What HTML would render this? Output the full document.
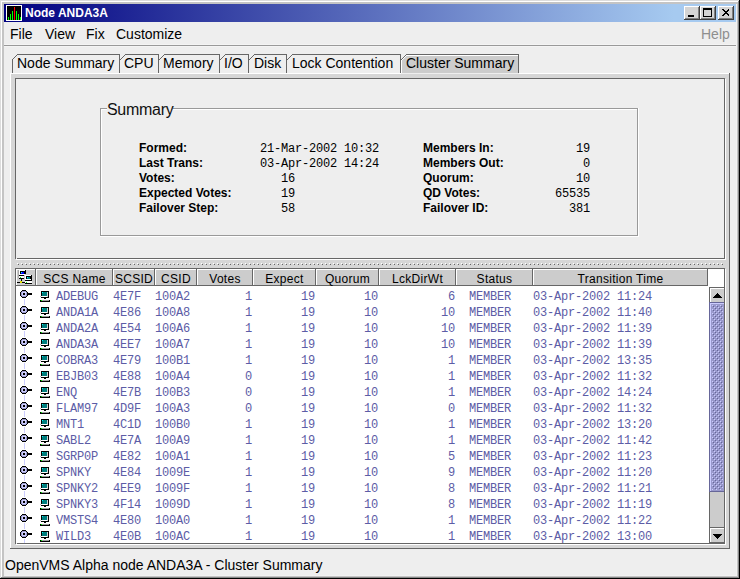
<!DOCTYPE html>
<html><head><meta charset="utf-8"><style>
html,body{margin:0;padding:0;}
body{width:740px;height:579px;overflow:hidden;position:relative;background:#eeeeee;font-family:"Liberation Sans",sans-serif;}
div{position:absolute;}
.t{white-space:pre;font-size:14px;line-height:16px;color:#000;}
.tb{white-space:pre;font-size:12px;line-height:14px;font-weight:bold;color:#000;}
.m{white-space:pre;font-family:"Liberation Mono",monospace;font-size:12px;line-height:14px;letter-spacing:-0.2px;color:#000;}
.c{white-space:pre;font-family:"Liberation Mono",monospace;font-size:12px;line-height:16px;letter-spacing:-0.2px;color:#5c5ca6;}
.h{white-space:pre;font-size:12px;letter-spacing:0.3px;line-height:16px;color:#000;text-align:center;}
</style></head><body>
<div style="position:absolute;left:0px;top:0px;width:740px;height:579px;background:#000000"></div>
<div style="position:absolute;left:0px;top:0px;width:739px;height:578px;background:#888888"></div>
<div style="position:absolute;left:0px;top:0px;width:738px;height:577px;background:#c4c4c4"></div>
<div style="position:absolute;left:0px;top:0px;width:1px;height:578px;background:#dcdcdc"></div>
<div style="position:absolute;left:0px;top:0px;width:739px;height:1px;background:#dcdcdc"></div>
<div style="position:absolute;left:1px;top:1px;width:1px;height:576px;background:#ffffff"></div>
<div style="position:absolute;left:1px;top:1px;width:737px;height:1px;background:#ffffff"></div>
<div style="position:absolute;left:4px;top:4px;width:733px;height:572px;background:#f2f2f2"></div>
<div style="position:absolute;left:4px;top:4px;width:732px;height:571px;background:#eeeeee"></div>
<div style="position:absolute;left:4px;top:4px;width:732px;height:18px;background:linear-gradient(to right,#000080 0px,#a6caf0 670px)"></div>
<svg style="position:absolute;left:6px;top:5px" width="16" height="16" viewBox="0 0 16 16" shape-rendering="crispEdges">
<rect x="0" y="0" width="16" height="16" fill="#fff"/><rect x="1" y="1" width="14" height="14" fill="#000"/>
<rect x="2" y="12" width="1" height="3" fill="#00ff00"/><rect x="4" y="9" width="1" height="6" fill="#00ff00"/>
<rect x="6" y="6" width="1" height="9" fill="#00ff00"/><rect x="8" y="2" width="1" height="13" fill="#ff0000"/>
<rect x="10" y="6" width="1" height="9" fill="#00ff00"/><rect x="12" y="9" width="1" height="6" fill="#00ff00"/>
<rect x="14" y="12" width="1" height="3" fill="#00ff00"/>
</svg>
<div class="tb" style="left:25px;top:6px;color:#fff;">Node ANDA3A</div>
<svg style="position:absolute;left:684px;top:6px" width="16" height="14" viewBox="0 0 16 14" shape-rendering="crispEdges"><rect x="0" y="0" width="16" height="14" fill="#404040"/><rect x="0" y="0" width="15" height="13" fill="#ffffff"/><rect x="1" y="1" width="14" height="12" fill="#808080"/><rect x="1" y="1" width="13" height="11" fill="#d4d4d4"/><rect x="4" y="9" width="6" height="2" fill="#000"/></svg>
<svg style="position:absolute;left:700px;top:6px" width="16" height="14" viewBox="0 0 16 14" shape-rendering="crispEdges"><rect x="0" y="0" width="16" height="14" fill="#404040"/><rect x="0" y="0" width="15" height="13" fill="#ffffff"/><rect x="1" y="1" width="14" height="12" fill="#808080"/><rect x="1" y="1" width="13" height="11" fill="#d4d4d4"/><rect x="3" y="2" width="9" height="9" fill="#000"/><rect x="4" y="4" width="7" height="6" fill="#d4d4d4"/></svg>
<svg style="position:absolute;left:718px;top:6px" width="16" height="14" viewBox="0 0 16 14" shape-rendering="crispEdges"><rect x="0" y="0" width="16" height="14" fill="#404040"/><rect x="0" y="0" width="15" height="13" fill="#ffffff"/><rect x="1" y="1" width="14" height="12" fill="#808080"/><rect x="1" y="1" width="13" height="11" fill="#d4d4d4"/><path d="M4 3 L5 3 L7.5 5.5 L10 3 L11 3 L11 4 L8.5 6.5 L11 9 L11 10 L10 10 L7.5 7.5 L5 10 L4 10 L4 9 L6.5 6.5 L4 4 Z" fill="#000"/></svg>
<div class="t" style="left:10px;top:26px;">File</div>
<div class="t" style="left:45px;top:26px;">View</div>
<div class="t" style="left:86px;top:26px;">Fix</div>
<div class="t" style="left:116px;top:26px;">Customize</div>
<div class="t" style="left:701px;top:26px;color:#8e8e8e;">Help</div>
<div style="position:absolute;left:4px;top:44px;width:732px;height:3px;background:#f4f4f4"></div>
<div style="position:absolute;left:4px;top:45px;width:732px;height:1px;background:#999999"></div>
<div style="position:absolute;left:10px;top:73px;width:720px;height:476px;background:#d6d6d6"></div>
<div style="position:absolute;left:10px;top:73px;width:720px;height:1px;background:#ffffff"></div>
<div style="position:absolute;left:10px;top:73px;width:1px;height:476px;background:#ffffff"></div>
<div style="position:absolute;left:401px;top:73px;width:118px;height:1px;background:#eeeeee"></div>
<div style="position:absolute;left:729px;top:73px;width:1px;height:476px;background:#666666"></div>
<div style="position:absolute;left:10px;top:548px;width:720px;height:1px;background:#666666"></div>
<svg style="position:absolute;left:12px;top:54px" width="108" height="19" viewBox="0 0 108 19" shape-rendering="crispEdges"><polygon points="0,6 6,0 108,0 108,19 0,19" fill="#eeeeee"/><rect x="6" y="0" width="102" height="1" fill="#666666"/><rect x="0" y="5" width="1" height="1" fill="#666666"/><rect x="1" y="4" width="1" height="1" fill="#666666"/><rect x="2" y="3" width="1" height="1" fill="#666666"/><rect x="3" y="2" width="1" height="1" fill="#666666"/><rect x="4" y="1" width="1" height="1" fill="#666666"/><rect x="5" y="0" width="1" height="1" fill="#666666"/><rect x="107" y="0" width="1" height="19" fill="#666666"/><rect x="0" y="5" width="1" height="14" fill="#666666"/></svg>
<div class="t" style="left:17px;top:55px;">Node Summary</div>
<svg style="position:absolute;left:120px;top:54px" width="39" height="19" viewBox="0 0 39 19" shape-rendering="crispEdges"><polygon points="0,6 6,0 39,0 39,19 0,19" fill="#eeeeee"/><rect x="6" y="0" width="33" height="1" fill="#666666"/><rect x="0" y="5" width="1" height="1" fill="#666666"/><rect x="1" y="4" width="1" height="1" fill="#666666"/><rect x="2" y="3" width="1" height="1" fill="#666666"/><rect x="3" y="2" width="1" height="1" fill="#666666"/><rect x="4" y="1" width="1" height="1" fill="#666666"/><rect x="5" y="0" width="1" height="1" fill="#666666"/><rect x="38" y="0" width="1" height="19" fill="#666666"/></svg>
<div class="t" style="left:124px;top:55px;">CPU</div>
<svg style="position:absolute;left:159px;top:54px" width="61" height="19" viewBox="0 0 61 19" shape-rendering="crispEdges"><polygon points="0,6 6,0 61,0 61,19 0,19" fill="#eeeeee"/><rect x="6" y="0" width="55" height="1" fill="#666666"/><rect x="0" y="5" width="1" height="1" fill="#666666"/><rect x="1" y="4" width="1" height="1" fill="#666666"/><rect x="2" y="3" width="1" height="1" fill="#666666"/><rect x="3" y="2" width="1" height="1" fill="#666666"/><rect x="4" y="1" width="1" height="1" fill="#666666"/><rect x="5" y="0" width="1" height="1" fill="#666666"/><rect x="60" y="0" width="1" height="19" fill="#666666"/></svg>
<div class="t" style="left:163px;top:55px;">Memory</div>
<svg style="position:absolute;left:220px;top:54px" width="29" height="19" viewBox="0 0 29 19" shape-rendering="crispEdges"><polygon points="0,6 6,0 29,0 29,19 0,19" fill="#eeeeee"/><rect x="6" y="0" width="23" height="1" fill="#666666"/><rect x="0" y="5" width="1" height="1" fill="#666666"/><rect x="1" y="4" width="1" height="1" fill="#666666"/><rect x="2" y="3" width="1" height="1" fill="#666666"/><rect x="3" y="2" width="1" height="1" fill="#666666"/><rect x="4" y="1" width="1" height="1" fill="#666666"/><rect x="5" y="0" width="1" height="1" fill="#666666"/><rect x="28" y="0" width="1" height="19" fill="#666666"/></svg>
<div class="t" style="left:224px;top:55px;">I/O</div>
<svg style="position:absolute;left:249px;top:54px" width="38" height="19" viewBox="0 0 38 19" shape-rendering="crispEdges"><polygon points="0,6 6,0 38,0 38,19 0,19" fill="#eeeeee"/><rect x="6" y="0" width="32" height="1" fill="#666666"/><rect x="0" y="5" width="1" height="1" fill="#666666"/><rect x="1" y="4" width="1" height="1" fill="#666666"/><rect x="2" y="3" width="1" height="1" fill="#666666"/><rect x="3" y="2" width="1" height="1" fill="#666666"/><rect x="4" y="1" width="1" height="1" fill="#666666"/><rect x="5" y="0" width="1" height="1" fill="#666666"/><rect x="37" y="0" width="1" height="19" fill="#666666"/></svg>
<div class="t" style="left:254px;top:55px;">Disk</div>
<svg style="position:absolute;left:287px;top:54px" width="114" height="19" viewBox="0 0 114 19" shape-rendering="crispEdges"><polygon points="0,6 6,0 114,0 114,19 0,19" fill="#eeeeee"/><rect x="6" y="0" width="108" height="1" fill="#666666"/><rect x="0" y="5" width="1" height="1" fill="#666666"/><rect x="1" y="4" width="1" height="1" fill="#666666"/><rect x="2" y="3" width="1" height="1" fill="#666666"/><rect x="3" y="2" width="1" height="1" fill="#666666"/><rect x="4" y="1" width="1" height="1" fill="#666666"/><rect x="5" y="0" width="1" height="1" fill="#666666"/><rect x="113" y="0" width="1" height="19" fill="#666666"/></svg>
<div class="t" style="left:292px;top:55px;">Lock Contention</div>
<svg style="position:absolute;left:401px;top:54px" width="118" height="19" viewBox="0 0 118 19" shape-rendering="crispEdges"><polygon points="0,6 6,0 118,0 118,19 0,19" fill="#cccccc"/><rect x="6" y="0" width="112" height="1" fill="#666666"/><rect x="0" y="5" width="1" height="1" fill="#666666"/><rect x="1" y="4" width="1" height="1" fill="#666666"/><rect x="1" y="5" width="1" height="1" fill="#ffffff"/><rect x="2" y="3" width="1" height="1" fill="#666666"/><rect x="2" y="4" width="1" height="1" fill="#ffffff"/><rect x="3" y="2" width="1" height="1" fill="#666666"/><rect x="3" y="3" width="1" height="1" fill="#ffffff"/><rect x="4" y="1" width="1" height="1" fill="#666666"/><rect x="4" y="2" width="1" height="1" fill="#ffffff"/><rect x="5" y="0" width="1" height="1" fill="#666666"/><rect x="5" y="1" width="1" height="1" fill="#ffffff"/><rect x="6" y="1" width="111" height="1" fill="#ffffff"/><rect x="117" y="0" width="1" height="19" fill="#666666"/><rect x="0" y="6" width="1" height="13" fill="#ffffff"/></svg>
<div class="t" style="left:406px;top:55px;">Cluster Summary</div>
<div style="position:absolute;left:16px;top:79px;width:710px;height:181px;background:#ffffff"></div>
<div style="position:absolute;left:15px;top:78px;width:710px;height:181px;background:#666666"></div>
<div style="position:absolute;left:16px;top:79px;width:708px;height:179px;background:#eeeeee"></div>
<div style="position:absolute;left:16px;top:258px;width:1px;height:1px;background:#eeeeee"></div>
<div style="position:absolute;left:100px;top:108px;width:538px;height:128px;border:1px solid #999999;box-sizing:border-box;"></div>
<div style="position:absolute;left:101px;top:109px;width:538px;height:128px;border:1px solid #ffffff;border-right:none;border-bottom:none;box-sizing:border-box;"></div>
<div style="position:absolute;left:638px;top:108px;width:1px;height:129px;background:#fff"></div>
<div style="position:absolute;left:100px;top:236px;width:539px;height:1px;background:#fff"></div>
<div style="position:absolute;left:100px;top:108px;width:538px;height:1px;background:#999999"></div>
<div style="position:absolute;left:100px;top:108px;width:1px;height:128px;background:#999999"></div>
<div style="position:absolute;left:637px;top:108px;width:1px;height:128px;background:#999999"></div>
<div style="position:absolute;left:100px;top:235px;width:538px;height:1px;background:#999999"></div>
<div style="position:absolute;left:107px;top:104px;width:66px;height:12px;background:#eeeeee"></div>
<div class="t" style="left:107px;top:101px;font-size:16px;line-height:18px;color:#111;letter-spacing:-0.3px;">Summary</div>
<div class="tb" style="left:139px;top:141px;">Formed:</div>
<div class="m" style="left:260px;top:142px;">21-Mar-2002 10:32</div>
<div class="tb" style="left:423px;top:141px;">Members In:</div>
<div class="m" style="left:480px;top:142px;width:110px;text-align:right;">19</div>
<div class="tb" style="left:139px;top:156px;">Last Trans:</div>
<div class="m" style="left:260px;top:157px;">03-Apr-2002 14:24</div>
<div class="tb" style="left:423px;top:156px;">Members Out:</div>
<div class="m" style="left:480px;top:157px;width:110px;text-align:right;">0</div>
<div class="tb" style="left:139px;top:171px;">Votes:</div>
<div class="m" style="left:281px;top:172px;">16</div>
<div class="tb" style="left:423px;top:171px;">Quorum:</div>
<div class="m" style="left:480px;top:172px;width:110px;text-align:right;">10</div>
<div class="tb" style="left:139px;top:186px;">Expected Votes:</div>
<div class="m" style="left:281px;top:187px;">19</div>
<div class="tb" style="left:423px;top:186px;">QD Votes:</div>
<div class="m" style="left:480px;top:187px;width:110px;text-align:right;">65535</div>
<div class="tb" style="left:139px;top:201px;">Failover Step:</div>
<div class="m" style="left:281px;top:202px;">58</div>
<div class="tb" style="left:423px;top:201px;">Failover ID:</div>
<div class="m" style="left:480px;top:202px;width:110px;text-align:right;">381</div>
<svg style="position:absolute;left:16px;top:262px" width="708" height="4" shape-rendering="crispEdges"><rect x="1" y="1" width="1" height="1" fill="#ffffff"/><rect x="2" y="2" width="1" height="1" fill="#666666"/><rect x="5" y="1" width="1" height="1" fill="#ffffff"/><rect x="6" y="2" width="1" height="1" fill="#666666"/><rect x="9" y="1" width="1" height="1" fill="#ffffff"/><rect x="10" y="2" width="1" height="1" fill="#666666"/><rect x="13" y="1" width="1" height="1" fill="#ffffff"/><rect x="14" y="2" width="1" height="1" fill="#666666"/><rect x="17" y="1" width="1" height="1" fill="#ffffff"/><rect x="18" y="2" width="1" height="1" fill="#666666"/><rect x="21" y="1" width="1" height="1" fill="#ffffff"/><rect x="22" y="2" width="1" height="1" fill="#666666"/><rect x="25" y="1" width="1" height="1" fill="#ffffff"/><rect x="26" y="2" width="1" height="1" fill="#666666"/><rect x="29" y="1" width="1" height="1" fill="#ffffff"/><rect x="30" y="2" width="1" height="1" fill="#666666"/><rect x="33" y="1" width="1" height="1" fill="#ffffff"/><rect x="34" y="2" width="1" height="1" fill="#666666"/><rect x="37" y="1" width="1" height="1" fill="#ffffff"/><rect x="38" y="2" width="1" height="1" fill="#666666"/><rect x="41" y="1" width="1" height="1" fill="#ffffff"/><rect x="42" y="2" width="1" height="1" fill="#666666"/><rect x="45" y="1" width="1" height="1" fill="#ffffff"/><rect x="46" y="2" width="1" height="1" fill="#666666"/><rect x="49" y="1" width="1" height="1" fill="#ffffff"/><rect x="50" y="2" width="1" height="1" fill="#666666"/><rect x="53" y="1" width="1" height="1" fill="#ffffff"/><rect x="54" y="2" width="1" height="1" fill="#666666"/><rect x="57" y="1" width="1" height="1" fill="#ffffff"/><rect x="58" y="2" width="1" height="1" fill="#666666"/><rect x="61" y="1" width="1" height="1" fill="#ffffff"/><rect x="62" y="2" width="1" height="1" fill="#666666"/><rect x="65" y="1" width="1" height="1" fill="#ffffff"/><rect x="66" y="2" width="1" height="1" fill="#666666"/><rect x="69" y="1" width="1" height="1" fill="#ffffff"/><rect x="70" y="2" width="1" height="1" fill="#666666"/><rect x="73" y="1" width="1" height="1" fill="#ffffff"/><rect x="74" y="2" width="1" height="1" fill="#666666"/><rect x="77" y="1" width="1" height="1" fill="#ffffff"/><rect x="78" y="2" width="1" height="1" fill="#666666"/><rect x="81" y="1" width="1" height="1" fill="#ffffff"/><rect x="82" y="2" width="1" height="1" fill="#666666"/><rect x="85" y="1" width="1" height="1" fill="#ffffff"/><rect x="86" y="2" width="1" height="1" fill="#666666"/><rect x="89" y="1" width="1" height="1" fill="#ffffff"/><rect x="90" y="2" width="1" height="1" fill="#666666"/><rect x="93" y="1" width="1" height="1" fill="#ffffff"/><rect x="94" y="2" width="1" height="1" fill="#666666"/><rect x="97" y="1" width="1" height="1" fill="#ffffff"/><rect x="98" y="2" width="1" height="1" fill="#666666"/><rect x="101" y="1" width="1" height="1" fill="#ffffff"/><rect x="102" y="2" width="1" height="1" fill="#666666"/><rect x="105" y="1" width="1" height="1" fill="#ffffff"/><rect x="106" y="2" width="1" height="1" fill="#666666"/><rect x="109" y="1" width="1" height="1" fill="#ffffff"/><rect x="110" y="2" width="1" height="1" fill="#666666"/><rect x="113" y="1" width="1" height="1" fill="#ffffff"/><rect x="114" y="2" width="1" height="1" fill="#666666"/><rect x="117" y="1" width="1" height="1" fill="#ffffff"/><rect x="118" y="2" width="1" height="1" fill="#666666"/><rect x="121" y="1" width="1" height="1" fill="#ffffff"/><rect x="122" y="2" width="1" height="1" fill="#666666"/><rect x="125" y="1" width="1" height="1" fill="#ffffff"/><rect x="126" y="2" width="1" height="1" fill="#666666"/><rect x="129" y="1" width="1" height="1" fill="#ffffff"/><rect x="130" y="2" width="1" height="1" fill="#666666"/><rect x="133" y="1" width="1" height="1" fill="#ffffff"/><rect x="134" y="2" width="1" height="1" fill="#666666"/><rect x="137" y="1" width="1" height="1" fill="#ffffff"/><rect x="138" y="2" width="1" height="1" fill="#666666"/><rect x="141" y="1" width="1" height="1" fill="#ffffff"/><rect x="142" y="2" width="1" height="1" fill="#666666"/><rect x="145" y="1" width="1" height="1" fill="#ffffff"/><rect x="146" y="2" width="1" height="1" fill="#666666"/><rect x="149" y="1" width="1" height="1" fill="#ffffff"/><rect x="150" y="2" width="1" height="1" fill="#666666"/><rect x="153" y="1" width="1" height="1" fill="#ffffff"/><rect x="154" y="2" width="1" height="1" fill="#666666"/><rect x="157" y="1" width="1" height="1" fill="#ffffff"/><rect x="158" y="2" width="1" height="1" fill="#666666"/><rect x="161" y="1" width="1" height="1" fill="#ffffff"/><rect x="162" y="2" width="1" height="1" fill="#666666"/><rect x="165" y="1" width="1" height="1" fill="#ffffff"/><rect x="166" y="2" width="1" height="1" fill="#666666"/><rect x="169" y="1" width="1" height="1" fill="#ffffff"/><rect x="170" y="2" width="1" height="1" fill="#666666"/><rect x="173" y="1" width="1" height="1" fill="#ffffff"/><rect x="174" y="2" width="1" height="1" fill="#666666"/><rect x="177" y="1" width="1" height="1" fill="#ffffff"/><rect x="178" y="2" width="1" height="1" fill="#666666"/><rect x="181" y="1" width="1" height="1" fill="#ffffff"/><rect x="182" y="2" width="1" height="1" fill="#666666"/><rect x="185" y="1" width="1" height="1" fill="#ffffff"/><rect x="186" y="2" width="1" height="1" fill="#666666"/><rect x="189" y="1" width="1" height="1" fill="#ffffff"/><rect x="190" y="2" width="1" height="1" fill="#666666"/><rect x="193" y="1" width="1" height="1" fill="#ffffff"/><rect x="194" y="2" width="1" height="1" fill="#666666"/><rect x="197" y="1" width="1" height="1" fill="#ffffff"/><rect x="198" y="2" width="1" height="1" fill="#666666"/><rect x="201" y="1" width="1" height="1" fill="#ffffff"/><rect x="202" y="2" width="1" height="1" fill="#666666"/><rect x="205" y="1" width="1" height="1" fill="#ffffff"/><rect x="206" y="2" width="1" height="1" fill="#666666"/><rect x="209" y="1" width="1" height="1" fill="#ffffff"/><rect x="210" y="2" width="1" height="1" fill="#666666"/><rect x="213" y="1" width="1" height="1" fill="#ffffff"/><rect x="214" y="2" width="1" height="1" fill="#666666"/><rect x="217" y="1" width="1" height="1" fill="#ffffff"/><rect x="218" y="2" width="1" height="1" fill="#666666"/><rect x="221" y="1" width="1" height="1" fill="#ffffff"/><rect x="222" y="2" width="1" height="1" fill="#666666"/><rect x="225" y="1" width="1" height="1" fill="#ffffff"/><rect x="226" y="2" width="1" height="1" fill="#666666"/><rect x="229" y="1" width="1" height="1" fill="#ffffff"/><rect x="230" y="2" width="1" height="1" fill="#666666"/><rect x="233" y="1" width="1" height="1" fill="#ffffff"/><rect x="234" y="2" width="1" height="1" fill="#666666"/><rect x="237" y="1" width="1" height="1" fill="#ffffff"/><rect x="238" y="2" width="1" height="1" fill="#666666"/><rect x="241" y="1" width="1" height="1" fill="#ffffff"/><rect x="242" y="2" width="1" height="1" fill="#666666"/><rect x="245" y="1" width="1" height="1" fill="#ffffff"/><rect x="246" y="2" width="1" height="1" fill="#666666"/><rect x="249" y="1" width="1" height="1" fill="#ffffff"/><rect x="250" y="2" width="1" height="1" fill="#666666"/><rect x="253" y="1" width="1" height="1" fill="#ffffff"/><rect x="254" y="2" width="1" height="1" fill="#666666"/><rect x="257" y="1" width="1" height="1" fill="#ffffff"/><rect x="258" y="2" width="1" height="1" fill="#666666"/><rect x="261" y="1" width="1" height="1" fill="#ffffff"/><rect x="262" y="2" width="1" height="1" fill="#666666"/><rect x="265" y="1" width="1" height="1" fill="#ffffff"/><rect x="266" y="2" width="1" height="1" fill="#666666"/><rect x="269" y="1" width="1" height="1" fill="#ffffff"/><rect x="270" y="2" width="1" height="1" fill="#666666"/><rect x="273" y="1" width="1" height="1" fill="#ffffff"/><rect x="274" y="2" width="1" height="1" fill="#666666"/><rect x="277" y="1" width="1" height="1" fill="#ffffff"/><rect x="278" y="2" width="1" height="1" fill="#666666"/><rect x="281" y="1" width="1" height="1" fill="#ffffff"/><rect x="282" y="2" width="1" height="1" fill="#666666"/><rect x="285" y="1" width="1" height="1" fill="#ffffff"/><rect x="286" y="2" width="1" height="1" fill="#666666"/><rect x="289" y="1" width="1" height="1" fill="#ffffff"/><rect x="290" y="2" width="1" height="1" fill="#666666"/><rect x="293" y="1" width="1" height="1" fill="#ffffff"/><rect x="294" y="2" width="1" height="1" fill="#666666"/><rect x="297" y="1" width="1" height="1" fill="#ffffff"/><rect x="298" y="2" width="1" height="1" fill="#666666"/><rect x="301" y="1" width="1" height="1" fill="#ffffff"/><rect x="302" y="2" width="1" height="1" fill="#666666"/><rect x="305" y="1" width="1" height="1" fill="#ffffff"/><rect x="306" y="2" width="1" height="1" fill="#666666"/><rect x="309" y="1" width="1" height="1" fill="#ffffff"/><rect x="310" y="2" width="1" height="1" fill="#666666"/><rect x="313" y="1" width="1" height="1" fill="#ffffff"/><rect x="314" y="2" width="1" height="1" fill="#666666"/><rect x="317" y="1" width="1" height="1" fill="#ffffff"/><rect x="318" y="2" width="1" height="1" fill="#666666"/><rect x="321" y="1" width="1" height="1" fill="#ffffff"/><rect x="322" y="2" width="1" height="1" fill="#666666"/><rect x="325" y="1" width="1" height="1" fill="#ffffff"/><rect x="326" y="2" width="1" height="1" fill="#666666"/><rect x="329" y="1" width="1" height="1" fill="#ffffff"/><rect x="330" y="2" width="1" height="1" fill="#666666"/><rect x="333" y="1" width="1" height="1" fill="#ffffff"/><rect x="334" y="2" width="1" height="1" fill="#666666"/><rect x="337" y="1" width="1" height="1" fill="#ffffff"/><rect x="338" y="2" width="1" height="1" fill="#666666"/><rect x="341" y="1" width="1" height="1" fill="#ffffff"/><rect x="342" y="2" width="1" height="1" fill="#666666"/><rect x="345" y="1" width="1" height="1" fill="#ffffff"/><rect x="346" y="2" width="1" height="1" fill="#666666"/><rect x="349" y="1" width="1" height="1" fill="#ffffff"/><rect x="350" y="2" width="1" height="1" fill="#666666"/><rect x="353" y="1" width="1" height="1" fill="#ffffff"/><rect x="354" y="2" width="1" height="1" fill="#666666"/><rect x="357" y="1" width="1" height="1" fill="#ffffff"/><rect x="358" y="2" width="1" height="1" fill="#666666"/><rect x="361" y="1" width="1" height="1" fill="#ffffff"/><rect x="362" y="2" width="1" height="1" fill="#666666"/><rect x="365" y="1" width="1" height="1" fill="#ffffff"/><rect x="366" y="2" width="1" height="1" fill="#666666"/><rect x="369" y="1" width="1" height="1" fill="#ffffff"/><rect x="370" y="2" width="1" height="1" fill="#666666"/><rect x="373" y="1" width="1" height="1" fill="#ffffff"/><rect x="374" y="2" width="1" height="1" fill="#666666"/><rect x="377" y="1" width="1" height="1" fill="#ffffff"/><rect x="378" y="2" width="1" height="1" fill="#666666"/><rect x="381" y="1" width="1" height="1" fill="#ffffff"/><rect x="382" y="2" width="1" height="1" fill="#666666"/><rect x="385" y="1" width="1" height="1" fill="#ffffff"/><rect x="386" y="2" width="1" height="1" fill="#666666"/><rect x="389" y="1" width="1" height="1" fill="#ffffff"/><rect x="390" y="2" width="1" height="1" fill="#666666"/><rect x="393" y="1" width="1" height="1" fill="#ffffff"/><rect x="394" y="2" width="1" height="1" fill="#666666"/><rect x="397" y="1" width="1" height="1" fill="#ffffff"/><rect x="398" y="2" width="1" height="1" fill="#666666"/><rect x="401" y="1" width="1" height="1" fill="#ffffff"/><rect x="402" y="2" width="1" height="1" fill="#666666"/><rect x="405" y="1" width="1" height="1" fill="#ffffff"/><rect x="406" y="2" width="1" height="1" fill="#666666"/><rect x="409" y="1" width="1" height="1" fill="#ffffff"/><rect x="410" y="2" width="1" height="1" fill="#666666"/><rect x="413" y="1" width="1" height="1" fill="#ffffff"/><rect x="414" y="2" width="1" height="1" fill="#666666"/><rect x="417" y="1" width="1" height="1" fill="#ffffff"/><rect x="418" y="2" width="1" height="1" fill="#666666"/><rect x="421" y="1" width="1" height="1" fill="#ffffff"/><rect x="422" y="2" width="1" height="1" fill="#666666"/><rect x="425" y="1" width="1" height="1" fill="#ffffff"/><rect x="426" y="2" width="1" height="1" fill="#666666"/><rect x="429" y="1" width="1" height="1" fill="#ffffff"/><rect x="430" y="2" width="1" height="1" fill="#666666"/><rect x="433" y="1" width="1" height="1" fill="#ffffff"/><rect x="434" y="2" width="1" height="1" fill="#666666"/><rect x="437" y="1" width="1" height="1" fill="#ffffff"/><rect x="438" y="2" width="1" height="1" fill="#666666"/><rect x="441" y="1" width="1" height="1" fill="#ffffff"/><rect x="442" y="2" width="1" height="1" fill="#666666"/><rect x="445" y="1" width="1" height="1" fill="#ffffff"/><rect x="446" y="2" width="1" height="1" fill="#666666"/><rect x="449" y="1" width="1" height="1" fill="#ffffff"/><rect x="450" y="2" width="1" height="1" fill="#666666"/><rect x="453" y="1" width="1" height="1" fill="#ffffff"/><rect x="454" y="2" width="1" height="1" fill="#666666"/><rect x="457" y="1" width="1" height="1" fill="#ffffff"/><rect x="458" y="2" width="1" height="1" fill="#666666"/><rect x="461" y="1" width="1" height="1" fill="#ffffff"/><rect x="462" y="2" width="1" height="1" fill="#666666"/><rect x="465" y="1" width="1" height="1" fill="#ffffff"/><rect x="466" y="2" width="1" height="1" fill="#666666"/><rect x="469" y="1" width="1" height="1" fill="#ffffff"/><rect x="470" y="2" width="1" height="1" fill="#666666"/><rect x="473" y="1" width="1" height="1" fill="#ffffff"/><rect x="474" y="2" width="1" height="1" fill="#666666"/><rect x="477" y="1" width="1" height="1" fill="#ffffff"/><rect x="478" y="2" width="1" height="1" fill="#666666"/><rect x="481" y="1" width="1" height="1" fill="#ffffff"/><rect x="482" y="2" width="1" height="1" fill="#666666"/><rect x="485" y="1" width="1" height="1" fill="#ffffff"/><rect x="486" y="2" width="1" height="1" fill="#666666"/><rect x="489" y="1" width="1" height="1" fill="#ffffff"/><rect x="490" y="2" width="1" height="1" fill="#666666"/><rect x="493" y="1" width="1" height="1" fill="#ffffff"/><rect x="494" y="2" width="1" height="1" fill="#666666"/><rect x="497" y="1" width="1" height="1" fill="#ffffff"/><rect x="498" y="2" width="1" height="1" fill="#666666"/><rect x="501" y="1" width="1" height="1" fill="#ffffff"/><rect x="502" y="2" width="1" height="1" fill="#666666"/><rect x="505" y="1" width="1" height="1" fill="#ffffff"/><rect x="506" y="2" width="1" height="1" fill="#666666"/><rect x="509" y="1" width="1" height="1" fill="#ffffff"/><rect x="510" y="2" width="1" height="1" fill="#666666"/><rect x="513" y="1" width="1" height="1" fill="#ffffff"/><rect x="514" y="2" width="1" height="1" fill="#666666"/><rect x="517" y="1" width="1" height="1" fill="#ffffff"/><rect x="518" y="2" width="1" height="1" fill="#666666"/><rect x="521" y="1" width="1" height="1" fill="#ffffff"/><rect x="522" y="2" width="1" height="1" fill="#666666"/><rect x="525" y="1" width="1" height="1" fill="#ffffff"/><rect x="526" y="2" width="1" height="1" fill="#666666"/><rect x="529" y="1" width="1" height="1" fill="#ffffff"/><rect x="530" y="2" width="1" height="1" fill="#666666"/><rect x="533" y="1" width="1" height="1" fill="#ffffff"/><rect x="534" y="2" width="1" height="1" fill="#666666"/><rect x="537" y="1" width="1" height="1" fill="#ffffff"/><rect x="538" y="2" width="1" height="1" fill="#666666"/><rect x="541" y="1" width="1" height="1" fill="#ffffff"/><rect x="542" y="2" width="1" height="1" fill="#666666"/><rect x="545" y="1" width="1" height="1" fill="#ffffff"/><rect x="546" y="2" width="1" height="1" fill="#666666"/><rect x="549" y="1" width="1" height="1" fill="#ffffff"/><rect x="550" y="2" width="1" height="1" fill="#666666"/><rect x="553" y="1" width="1" height="1" fill="#ffffff"/><rect x="554" y="2" width="1" height="1" fill="#666666"/><rect x="557" y="1" width="1" height="1" fill="#ffffff"/><rect x="558" y="2" width="1" height="1" fill="#666666"/><rect x="561" y="1" width="1" height="1" fill="#ffffff"/><rect x="562" y="2" width="1" height="1" fill="#666666"/><rect x="565" y="1" width="1" height="1" fill="#ffffff"/><rect x="566" y="2" width="1" height="1" fill="#666666"/><rect x="569" y="1" width="1" height="1" fill="#ffffff"/><rect x="570" y="2" width="1" height="1" fill="#666666"/><rect x="573" y="1" width="1" height="1" fill="#ffffff"/><rect x="574" y="2" width="1" height="1" fill="#666666"/><rect x="577" y="1" width="1" height="1" fill="#ffffff"/><rect x="578" y="2" width="1" height="1" fill="#666666"/><rect x="581" y="1" width="1" height="1" fill="#ffffff"/><rect x="582" y="2" width="1" height="1" fill="#666666"/><rect x="585" y="1" width="1" height="1" fill="#ffffff"/><rect x="586" y="2" width="1" height="1" fill="#666666"/><rect x="589" y="1" width="1" height="1" fill="#ffffff"/><rect x="590" y="2" width="1" height="1" fill="#666666"/><rect x="593" y="1" width="1" height="1" fill="#ffffff"/><rect x="594" y="2" width="1" height="1" fill="#666666"/><rect x="597" y="1" width="1" height="1" fill="#ffffff"/><rect x="598" y="2" width="1" height="1" fill="#666666"/><rect x="601" y="1" width="1" height="1" fill="#ffffff"/><rect x="602" y="2" width="1" height="1" fill="#666666"/><rect x="605" y="1" width="1" height="1" fill="#ffffff"/><rect x="606" y="2" width="1" height="1" fill="#666666"/><rect x="609" y="1" width="1" height="1" fill="#ffffff"/><rect x="610" y="2" width="1" height="1" fill="#666666"/><rect x="613" y="1" width="1" height="1" fill="#ffffff"/><rect x="614" y="2" width="1" height="1" fill="#666666"/><rect x="617" y="1" width="1" height="1" fill="#ffffff"/><rect x="618" y="2" width="1" height="1" fill="#666666"/><rect x="621" y="1" width="1" height="1" fill="#ffffff"/><rect x="622" y="2" width="1" height="1" fill="#666666"/><rect x="625" y="1" width="1" height="1" fill="#ffffff"/><rect x="626" y="2" width="1" height="1" fill="#666666"/><rect x="629" y="1" width="1" height="1" fill="#ffffff"/><rect x="630" y="2" width="1" height="1" fill="#666666"/><rect x="633" y="1" width="1" height="1" fill="#ffffff"/><rect x="634" y="2" width="1" height="1" fill="#666666"/><rect x="637" y="1" width="1" height="1" fill="#ffffff"/><rect x="638" y="2" width="1" height="1" fill="#666666"/><rect x="641" y="1" width="1" height="1" fill="#ffffff"/><rect x="642" y="2" width="1" height="1" fill="#666666"/><rect x="645" y="1" width="1" height="1" fill="#ffffff"/><rect x="646" y="2" width="1" height="1" fill="#666666"/><rect x="649" y="1" width="1" height="1" fill="#ffffff"/><rect x="650" y="2" width="1" height="1" fill="#666666"/><rect x="653" y="1" width="1" height="1" fill="#ffffff"/><rect x="654" y="2" width="1" height="1" fill="#666666"/><rect x="657" y="1" width="1" height="1" fill="#ffffff"/><rect x="658" y="2" width="1" height="1" fill="#666666"/><rect x="661" y="1" width="1" height="1" fill="#ffffff"/><rect x="662" y="2" width="1" height="1" fill="#666666"/><rect x="665" y="1" width="1" height="1" fill="#ffffff"/><rect x="666" y="2" width="1" height="1" fill="#666666"/><rect x="669" y="1" width="1" height="1" fill="#ffffff"/><rect x="670" y="2" width="1" height="1" fill="#666666"/><rect x="673" y="1" width="1" height="1" fill="#ffffff"/><rect x="674" y="2" width="1" height="1" fill="#666666"/><rect x="677" y="1" width="1" height="1" fill="#ffffff"/><rect x="678" y="2" width="1" height="1" fill="#666666"/><rect x="681" y="1" width="1" height="1" fill="#ffffff"/><rect x="682" y="2" width="1" height="1" fill="#666666"/><rect x="685" y="1" width="1" height="1" fill="#ffffff"/><rect x="686" y="2" width="1" height="1" fill="#666666"/><rect x="689" y="1" width="1" height="1" fill="#ffffff"/><rect x="690" y="2" width="1" height="1" fill="#666666"/><rect x="693" y="1" width="1" height="1" fill="#ffffff"/><rect x="694" y="2" width="1" height="1" fill="#666666"/><rect x="697" y="1" width="1" height="1" fill="#ffffff"/><rect x="698" y="2" width="1" height="1" fill="#666666"/><rect x="701" y="1" width="1" height="1" fill="#ffffff"/><rect x="702" y="2" width="1" height="1" fill="#666666"/><rect x="705" y="1" width="1" height="1" fill="#ffffff"/><rect x="706" y="2" width="1" height="1" fill="#666666"/></svg>
<div style="position:absolute;left:16px;top:269px;width:710px;height:276px;background:#ffffff"></div>
<div style="position:absolute;left:15px;top:268px;width:710px;height:276px;background:#666666"></div>
<div style="position:absolute;left:16px;top:269px;width:708px;height:274px;background:#ffffff"></div>
<div style="position:absolute;left:16px;top:543px;width:1px;height:1px;background:#eeeeee"></div>
<div style="position:absolute;left:16px;top:269px;width:20px;height:17px;background:#666666"></div>
<div style="position:absolute;left:16px;top:269px;width:19px;height:16px;background:#ffffff"></div>
<div style="position:absolute;left:17px;top:270px;width:18px;height:15px;background:#cccccc"></div>
<div style="position:absolute;left:36px;top:269px;width:77px;height:17px;background:#666666"></div>
<div style="position:absolute;left:36px;top:269px;width:76px;height:16px;background:#ffffff"></div>
<div style="position:absolute;left:37px;top:270px;width:75px;height:15px;background:#cccccc"></div>
<div class="h" style="left:36px;top:271px;width:77px;">SCS Name</div>
<div style="position:absolute;left:113px;top:269px;width:42px;height:17px;background:#666666"></div>
<div style="position:absolute;left:113px;top:269px;width:41px;height:16px;background:#ffffff"></div>
<div style="position:absolute;left:114px;top:270px;width:40px;height:15px;background:#cccccc"></div>
<div class="h" style="left:113px;top:271px;width:42px;">SCSID</div>
<div style="position:absolute;left:155px;top:269px;width:42px;height:17px;background:#666666"></div>
<div style="position:absolute;left:155px;top:269px;width:41px;height:16px;background:#ffffff"></div>
<div style="position:absolute;left:156px;top:270px;width:40px;height:15px;background:#cccccc"></div>
<div class="h" style="left:155px;top:271px;width:42px;">CSID</div>
<div style="position:absolute;left:197px;top:269px;width:56px;height:17px;background:#666666"></div>
<div style="position:absolute;left:197px;top:269px;width:55px;height:16px;background:#ffffff"></div>
<div style="position:absolute;left:198px;top:270px;width:54px;height:15px;background:#cccccc"></div>
<div class="h" style="left:197px;top:271px;width:56px;">Votes</div>
<div style="position:absolute;left:253px;top:269px;width:63px;height:17px;background:#666666"></div>
<div style="position:absolute;left:253px;top:269px;width:62px;height:16px;background:#ffffff"></div>
<div style="position:absolute;left:254px;top:270px;width:61px;height:15px;background:#cccccc"></div>
<div class="h" style="left:253px;top:271px;width:63px;">Expect</div>
<div style="position:absolute;left:316px;top:269px;width:63px;height:17px;background:#666666"></div>
<div style="position:absolute;left:316px;top:269px;width:62px;height:16px;background:#ffffff"></div>
<div style="position:absolute;left:317px;top:270px;width:61px;height:15px;background:#cccccc"></div>
<div class="h" style="left:316px;top:271px;width:63px;">Quorum</div>
<div style="position:absolute;left:379px;top:269px;width:77px;height:17px;background:#666666"></div>
<div style="position:absolute;left:379px;top:269px;width:76px;height:16px;background:#ffffff"></div>
<div style="position:absolute;left:380px;top:270px;width:75px;height:15px;background:#cccccc"></div>
<div class="h" style="left:379px;top:271px;width:77px;">LckDirWt</div>
<div style="position:absolute;left:456px;top:269px;width:77px;height:17px;background:#666666"></div>
<div style="position:absolute;left:456px;top:269px;width:76px;height:16px;background:#ffffff"></div>
<div style="position:absolute;left:457px;top:270px;width:75px;height:15px;background:#cccccc"></div>
<div class="h" style="left:456px;top:271px;width:77px;">Status</div>
<div style="position:absolute;left:533px;top:269px;width:175px;height:17px;background:#666666"></div>
<div style="position:absolute;left:533px;top:269px;width:174px;height:16px;background:#ffffff"></div>
<div style="position:absolute;left:534px;top:270px;width:173px;height:15px;background:#cccccc"></div>
<div class="h" style="left:533px;top:271px;width:175px;">Transition Time</div>
<svg style="position:absolute;left:16px;top:269px" width="19" height="16" shape-rendering="crispEdges"><rect x="2" y="1" width="1" height="8" fill="#a8a8a8"/><rect x="3" y="1" width="6" height="5" fill="#ffffff"/><rect x="4" y="2" width="5" height="3" fill="#000000"/><rect x="5" y="3" width="3" height="2" fill="#0000ff"/><rect x="5" y="3" width="1" height="1" fill="#00ffff"/><rect x="9" y="1" width="1" height="4" fill="#000000"/><rect x="3" y="6" width="5" height="1" fill="#000000"/><rect x="3" y="7" width="5" height="2" fill="#ffffff"/><rect x="4" y="8" width="1" height="1" fill="#00ff00"/><rect x="3" y="9" width="5" height="1" fill="#000000"/><rect x="5" y="10" width="1" height="3" fill="#000000"/><rect x="1" y="13" width="8" height="1" fill="#000000"/><rect x="4" y="12" width="2" height="2" fill="#e0e000"/><rect x="9" y="6" width="7" height="6" fill="#ffffff"/><rect x="10" y="7" width="5" height="3" fill="#000000"/><rect x="11" y="8" width="3" height="2" fill="#008080"/><rect x="11" y="8" width="1" height="1" fill="#00ffff"/><rect x="15" y="6" width="1" height="6" fill="#000000"/><rect x="9" y="11" width="7" height="1" fill="#000000"/><rect x="9" y="12" width="7" height="2" fill="#ffffff"/><rect x="10" y="13" width="1" height="1" fill="#00ff00"/><rect x="9" y="14" width="7" height="1" fill="#000000"/></svg>
<svg style="position:absolute;left:20px;top:290px" width="12" height="15" shape-rendering="crispEdges"><rect x="2" y="0" width="4" height="1" fill="#000"/><rect x="1" y="1" width="1" height="1" fill="#000"/><rect x="6" y="1" width="1" height="1" fill="#000"/><rect x="0" y="2" width="1" height="4" fill="#000"/><rect x="7" y="2" width="1" height="4" fill="#000"/><rect x="1" y="6" width="1" height="1" fill="#000"/><rect x="6" y="6" width="1" height="1" fill="#000"/><rect x="2" y="7" width="4" height="1" fill="#000"/><rect x="2" y="1" width="4" height="1" fill="#9999cc"/><rect x="1" y="2" width="1" height="4" fill="#9999cc"/><rect x="6" y="2" width="1" height="4" fill="#9999cc"/><rect x="2" y="6" width="4" height="1" fill="#9999cc"/><rect x="2" y="2" width="4" height="4" fill="#ccccff"/><rect x="5" y="2" width="1" height="1" fill="#eeeeff"/><rect x="3" y="3" width="2" height="2" fill="#000"/><rect x="8" y="3" width="4" height="2" fill="#000"/><rect x="4" y="9" width="1" height="6" fill="#ccccff"/></svg>
<svg style="position:absolute;left:40px;top:290px" width="10" height="12" shape-rendering="crispEdges"><rect x="1" y="1" width="7" height="1" fill="#000"/><rect x="1" y="2" width="1" height="4" fill="#000"/><rect x="2" y="2" width="5" height="4" fill="#008080"/><rect x="2" y="2" width="1" height="1" fill="#00ffff"/><rect x="7" y="2" width="1" height="5" fill="#d8d8d8"/><rect x="8" y="1" width="1" height="7" fill="#000"/><rect x="0" y="6" width="1" height="1" fill="#c0c0c0"/><rect x="1" y="6" width="6" height="1" fill="#ffffff"/><rect x="1" y="7" width="7" height="1" fill="#000"/><rect x="4" y="8" width="2" height="1" fill="#000"/><rect x="0" y="10" width="10" height="2" fill="#000"/><rect x="1" y="10" width="1" height="1" fill="#00ff00"/><rect x="2" y="10" width="7" height="1" fill="#a0a0a0"/></svg>
<div class="c" style="left:56px;top:289px;">ADEBUG</div>
<div class="c" style="left:113px;top:289px;">4E7F</div>
<div class="c" style="left:155px;top:289px;">100A2</div>
<div class="c" style="left:192px;top:289px;width:60px;text-align:right;">1</div>
<div class="c" style="left:255px;top:289px;width:60px;text-align:right;">19</div>
<div class="c" style="left:318px;top:289px;width:60px;text-align:right;">10</div>
<div class="c" style="left:395px;top:289px;width:60px;text-align:right;">6</div>
<div class="c" style="left:469px;top:289px;">MEMBER</div>
<div class="c" style="left:533px;top:289px;">03-Apr-2002 11:24</div>
<svg style="position:absolute;left:20px;top:306px" width="12" height="15" shape-rendering="crispEdges"><rect x="2" y="0" width="4" height="1" fill="#000"/><rect x="1" y="1" width="1" height="1" fill="#000"/><rect x="6" y="1" width="1" height="1" fill="#000"/><rect x="0" y="2" width="1" height="4" fill="#000"/><rect x="7" y="2" width="1" height="4" fill="#000"/><rect x="1" y="6" width="1" height="1" fill="#000"/><rect x="6" y="6" width="1" height="1" fill="#000"/><rect x="2" y="7" width="4" height="1" fill="#000"/><rect x="2" y="1" width="4" height="1" fill="#9999cc"/><rect x="1" y="2" width="1" height="4" fill="#9999cc"/><rect x="6" y="2" width="1" height="4" fill="#9999cc"/><rect x="2" y="6" width="4" height="1" fill="#9999cc"/><rect x="2" y="2" width="4" height="4" fill="#ccccff"/><rect x="5" y="2" width="1" height="1" fill="#eeeeff"/><rect x="3" y="3" width="2" height="2" fill="#000"/><rect x="8" y="3" width="4" height="2" fill="#000"/><rect x="4" y="9" width="1" height="6" fill="#ccccff"/></svg>
<svg style="position:absolute;left:40px;top:306px" width="10" height="12" shape-rendering="crispEdges"><rect x="1" y="1" width="7" height="1" fill="#000"/><rect x="1" y="2" width="1" height="4" fill="#000"/><rect x="2" y="2" width="5" height="4" fill="#008080"/><rect x="2" y="2" width="1" height="1" fill="#00ffff"/><rect x="7" y="2" width="1" height="5" fill="#d8d8d8"/><rect x="8" y="1" width="1" height="7" fill="#000"/><rect x="0" y="6" width="1" height="1" fill="#c0c0c0"/><rect x="1" y="6" width="6" height="1" fill="#ffffff"/><rect x="1" y="7" width="7" height="1" fill="#000"/><rect x="4" y="8" width="2" height="1" fill="#000"/><rect x="0" y="10" width="10" height="2" fill="#000"/><rect x="1" y="10" width="1" height="1" fill="#00ff00"/><rect x="2" y="10" width="7" height="1" fill="#a0a0a0"/></svg>
<div class="c" style="left:56px;top:305px;">ANDA1A</div>
<div class="c" style="left:113px;top:305px;">4E86</div>
<div class="c" style="left:155px;top:305px;">100A8</div>
<div class="c" style="left:192px;top:305px;width:60px;text-align:right;">1</div>
<div class="c" style="left:255px;top:305px;width:60px;text-align:right;">19</div>
<div class="c" style="left:318px;top:305px;width:60px;text-align:right;">10</div>
<div class="c" style="left:395px;top:305px;width:60px;text-align:right;">10</div>
<div class="c" style="left:469px;top:305px;">MEMBER</div>
<div class="c" style="left:533px;top:305px;">03-Apr-2002 11:40</div>
<svg style="position:absolute;left:20px;top:322px" width="12" height="15" shape-rendering="crispEdges"><rect x="2" y="0" width="4" height="1" fill="#000"/><rect x="1" y="1" width="1" height="1" fill="#000"/><rect x="6" y="1" width="1" height="1" fill="#000"/><rect x="0" y="2" width="1" height="4" fill="#000"/><rect x="7" y="2" width="1" height="4" fill="#000"/><rect x="1" y="6" width="1" height="1" fill="#000"/><rect x="6" y="6" width="1" height="1" fill="#000"/><rect x="2" y="7" width="4" height="1" fill="#000"/><rect x="2" y="1" width="4" height="1" fill="#9999cc"/><rect x="1" y="2" width="1" height="4" fill="#9999cc"/><rect x="6" y="2" width="1" height="4" fill="#9999cc"/><rect x="2" y="6" width="4" height="1" fill="#9999cc"/><rect x="2" y="2" width="4" height="4" fill="#ccccff"/><rect x="5" y="2" width="1" height="1" fill="#eeeeff"/><rect x="3" y="3" width="2" height="2" fill="#000"/><rect x="8" y="3" width="4" height="2" fill="#000"/><rect x="4" y="9" width="1" height="6" fill="#ccccff"/></svg>
<svg style="position:absolute;left:40px;top:322px" width="10" height="12" shape-rendering="crispEdges"><rect x="1" y="1" width="7" height="1" fill="#000"/><rect x="1" y="2" width="1" height="4" fill="#000"/><rect x="2" y="2" width="5" height="4" fill="#008080"/><rect x="2" y="2" width="1" height="1" fill="#00ffff"/><rect x="7" y="2" width="1" height="5" fill="#d8d8d8"/><rect x="8" y="1" width="1" height="7" fill="#000"/><rect x="0" y="6" width="1" height="1" fill="#c0c0c0"/><rect x="1" y="6" width="6" height="1" fill="#ffffff"/><rect x="1" y="7" width="7" height="1" fill="#000"/><rect x="4" y="8" width="2" height="1" fill="#000"/><rect x="0" y="10" width="10" height="2" fill="#000"/><rect x="1" y="10" width="1" height="1" fill="#00ff00"/><rect x="2" y="10" width="7" height="1" fill="#a0a0a0"/></svg>
<div class="c" style="left:56px;top:321px;">ANDA2A</div>
<div class="c" style="left:113px;top:321px;">4E54</div>
<div class="c" style="left:155px;top:321px;">100A6</div>
<div class="c" style="left:192px;top:321px;width:60px;text-align:right;">1</div>
<div class="c" style="left:255px;top:321px;width:60px;text-align:right;">19</div>
<div class="c" style="left:318px;top:321px;width:60px;text-align:right;">10</div>
<div class="c" style="left:395px;top:321px;width:60px;text-align:right;">10</div>
<div class="c" style="left:469px;top:321px;">MEMBER</div>
<div class="c" style="left:533px;top:321px;">03-Apr-2002 11:39</div>
<svg style="position:absolute;left:20px;top:338px" width="12" height="15" shape-rendering="crispEdges"><rect x="2" y="0" width="4" height="1" fill="#000"/><rect x="1" y="1" width="1" height="1" fill="#000"/><rect x="6" y="1" width="1" height="1" fill="#000"/><rect x="0" y="2" width="1" height="4" fill="#000"/><rect x="7" y="2" width="1" height="4" fill="#000"/><rect x="1" y="6" width="1" height="1" fill="#000"/><rect x="6" y="6" width="1" height="1" fill="#000"/><rect x="2" y="7" width="4" height="1" fill="#000"/><rect x="2" y="1" width="4" height="1" fill="#9999cc"/><rect x="1" y="2" width="1" height="4" fill="#9999cc"/><rect x="6" y="2" width="1" height="4" fill="#9999cc"/><rect x="2" y="6" width="4" height="1" fill="#9999cc"/><rect x="2" y="2" width="4" height="4" fill="#ccccff"/><rect x="5" y="2" width="1" height="1" fill="#eeeeff"/><rect x="3" y="3" width="2" height="2" fill="#000"/><rect x="8" y="3" width="4" height="2" fill="#000"/><rect x="4" y="9" width="1" height="6" fill="#ccccff"/></svg>
<svg style="position:absolute;left:40px;top:338px" width="10" height="12" shape-rendering="crispEdges"><rect x="1" y="1" width="7" height="1" fill="#000"/><rect x="1" y="2" width="1" height="4" fill="#000"/><rect x="2" y="2" width="5" height="4" fill="#008080"/><rect x="2" y="2" width="1" height="1" fill="#00ffff"/><rect x="7" y="2" width="1" height="5" fill="#d8d8d8"/><rect x="8" y="1" width="1" height="7" fill="#000"/><rect x="0" y="6" width="1" height="1" fill="#c0c0c0"/><rect x="1" y="6" width="6" height="1" fill="#ffffff"/><rect x="1" y="7" width="7" height="1" fill="#000"/><rect x="4" y="8" width="2" height="1" fill="#000"/><rect x="0" y="10" width="10" height="2" fill="#000"/><rect x="1" y="10" width="1" height="1" fill="#00ff00"/><rect x="2" y="10" width="7" height="1" fill="#a0a0a0"/></svg>
<div class="c" style="left:56px;top:337px;">ANDA3A</div>
<div class="c" style="left:113px;top:337px;">4EE7</div>
<div class="c" style="left:155px;top:337px;">100A7</div>
<div class="c" style="left:192px;top:337px;width:60px;text-align:right;">1</div>
<div class="c" style="left:255px;top:337px;width:60px;text-align:right;">19</div>
<div class="c" style="left:318px;top:337px;width:60px;text-align:right;">10</div>
<div class="c" style="left:395px;top:337px;width:60px;text-align:right;">10</div>
<div class="c" style="left:469px;top:337px;">MEMBER</div>
<div class="c" style="left:533px;top:337px;">03-Apr-2002 11:39</div>
<svg style="position:absolute;left:20px;top:354px" width="12" height="15" shape-rendering="crispEdges"><rect x="2" y="0" width="4" height="1" fill="#000"/><rect x="1" y="1" width="1" height="1" fill="#000"/><rect x="6" y="1" width="1" height="1" fill="#000"/><rect x="0" y="2" width="1" height="4" fill="#000"/><rect x="7" y="2" width="1" height="4" fill="#000"/><rect x="1" y="6" width="1" height="1" fill="#000"/><rect x="6" y="6" width="1" height="1" fill="#000"/><rect x="2" y="7" width="4" height="1" fill="#000"/><rect x="2" y="1" width="4" height="1" fill="#9999cc"/><rect x="1" y="2" width="1" height="4" fill="#9999cc"/><rect x="6" y="2" width="1" height="4" fill="#9999cc"/><rect x="2" y="6" width="4" height="1" fill="#9999cc"/><rect x="2" y="2" width="4" height="4" fill="#ccccff"/><rect x="5" y="2" width="1" height="1" fill="#eeeeff"/><rect x="3" y="3" width="2" height="2" fill="#000"/><rect x="8" y="3" width="4" height="2" fill="#000"/><rect x="4" y="9" width="1" height="6" fill="#ccccff"/></svg>
<svg style="position:absolute;left:40px;top:354px" width="10" height="12" shape-rendering="crispEdges"><rect x="1" y="1" width="7" height="1" fill="#000"/><rect x="1" y="2" width="1" height="4" fill="#000"/><rect x="2" y="2" width="5" height="4" fill="#008080"/><rect x="2" y="2" width="1" height="1" fill="#00ffff"/><rect x="7" y="2" width="1" height="5" fill="#d8d8d8"/><rect x="8" y="1" width="1" height="7" fill="#000"/><rect x="0" y="6" width="1" height="1" fill="#c0c0c0"/><rect x="1" y="6" width="6" height="1" fill="#ffffff"/><rect x="1" y="7" width="7" height="1" fill="#000"/><rect x="4" y="8" width="2" height="1" fill="#000"/><rect x="0" y="10" width="10" height="2" fill="#000"/><rect x="1" y="10" width="1" height="1" fill="#00ff00"/><rect x="2" y="10" width="7" height="1" fill="#a0a0a0"/></svg>
<div class="c" style="left:56px;top:353px;">COBRA3</div>
<div class="c" style="left:113px;top:353px;">4E79</div>
<div class="c" style="left:155px;top:353px;">100B1</div>
<div class="c" style="left:192px;top:353px;width:60px;text-align:right;">1</div>
<div class="c" style="left:255px;top:353px;width:60px;text-align:right;">19</div>
<div class="c" style="left:318px;top:353px;width:60px;text-align:right;">10</div>
<div class="c" style="left:395px;top:353px;width:60px;text-align:right;">1</div>
<div class="c" style="left:469px;top:353px;">MEMBER</div>
<div class="c" style="left:533px;top:353px;">03-Apr-2002 13:35</div>
<svg style="position:absolute;left:20px;top:370px" width="12" height="15" shape-rendering="crispEdges"><rect x="2" y="0" width="4" height="1" fill="#000"/><rect x="1" y="1" width="1" height="1" fill="#000"/><rect x="6" y="1" width="1" height="1" fill="#000"/><rect x="0" y="2" width="1" height="4" fill="#000"/><rect x="7" y="2" width="1" height="4" fill="#000"/><rect x="1" y="6" width="1" height="1" fill="#000"/><rect x="6" y="6" width="1" height="1" fill="#000"/><rect x="2" y="7" width="4" height="1" fill="#000"/><rect x="2" y="1" width="4" height="1" fill="#9999cc"/><rect x="1" y="2" width="1" height="4" fill="#9999cc"/><rect x="6" y="2" width="1" height="4" fill="#9999cc"/><rect x="2" y="6" width="4" height="1" fill="#9999cc"/><rect x="2" y="2" width="4" height="4" fill="#ccccff"/><rect x="5" y="2" width="1" height="1" fill="#eeeeff"/><rect x="3" y="3" width="2" height="2" fill="#000"/><rect x="8" y="3" width="4" height="2" fill="#000"/><rect x="4" y="9" width="1" height="6" fill="#ccccff"/></svg>
<svg style="position:absolute;left:40px;top:370px" width="10" height="12" shape-rendering="crispEdges"><rect x="1" y="1" width="7" height="1" fill="#000"/><rect x="1" y="2" width="1" height="4" fill="#000"/><rect x="2" y="2" width="5" height="4" fill="#008080"/><rect x="2" y="2" width="1" height="1" fill="#00ffff"/><rect x="7" y="2" width="1" height="5" fill="#d8d8d8"/><rect x="8" y="1" width="1" height="7" fill="#000"/><rect x="0" y="6" width="1" height="1" fill="#c0c0c0"/><rect x="1" y="6" width="6" height="1" fill="#ffffff"/><rect x="1" y="7" width="7" height="1" fill="#000"/><rect x="4" y="8" width="2" height="1" fill="#000"/><rect x="0" y="10" width="10" height="2" fill="#000"/><rect x="1" y="10" width="1" height="1" fill="#00ff00"/><rect x="2" y="10" width="7" height="1" fill="#a0a0a0"/></svg>
<div class="c" style="left:56px;top:369px;">EBJB03</div>
<div class="c" style="left:113px;top:369px;">4E88</div>
<div class="c" style="left:155px;top:369px;">100A4</div>
<div class="c" style="left:192px;top:369px;width:60px;text-align:right;">0</div>
<div class="c" style="left:255px;top:369px;width:60px;text-align:right;">19</div>
<div class="c" style="left:318px;top:369px;width:60px;text-align:right;">10</div>
<div class="c" style="left:395px;top:369px;width:60px;text-align:right;">1</div>
<div class="c" style="left:469px;top:369px;">MEMBER</div>
<div class="c" style="left:533px;top:369px;">03-Apr-2002 11:32</div>
<svg style="position:absolute;left:20px;top:386px" width="12" height="15" shape-rendering="crispEdges"><rect x="2" y="0" width="4" height="1" fill="#000"/><rect x="1" y="1" width="1" height="1" fill="#000"/><rect x="6" y="1" width="1" height="1" fill="#000"/><rect x="0" y="2" width="1" height="4" fill="#000"/><rect x="7" y="2" width="1" height="4" fill="#000"/><rect x="1" y="6" width="1" height="1" fill="#000"/><rect x="6" y="6" width="1" height="1" fill="#000"/><rect x="2" y="7" width="4" height="1" fill="#000"/><rect x="2" y="1" width="4" height="1" fill="#9999cc"/><rect x="1" y="2" width="1" height="4" fill="#9999cc"/><rect x="6" y="2" width="1" height="4" fill="#9999cc"/><rect x="2" y="6" width="4" height="1" fill="#9999cc"/><rect x="2" y="2" width="4" height="4" fill="#ccccff"/><rect x="5" y="2" width="1" height="1" fill="#eeeeff"/><rect x="3" y="3" width="2" height="2" fill="#000"/><rect x="8" y="3" width="4" height="2" fill="#000"/><rect x="4" y="9" width="1" height="6" fill="#ccccff"/></svg>
<svg style="position:absolute;left:40px;top:386px" width="10" height="12" shape-rendering="crispEdges"><rect x="1" y="1" width="7" height="1" fill="#000"/><rect x="1" y="2" width="1" height="4" fill="#000"/><rect x="2" y="2" width="5" height="4" fill="#008080"/><rect x="2" y="2" width="1" height="1" fill="#00ffff"/><rect x="7" y="2" width="1" height="5" fill="#d8d8d8"/><rect x="8" y="1" width="1" height="7" fill="#000"/><rect x="0" y="6" width="1" height="1" fill="#c0c0c0"/><rect x="1" y="6" width="6" height="1" fill="#ffffff"/><rect x="1" y="7" width="7" height="1" fill="#000"/><rect x="4" y="8" width="2" height="1" fill="#000"/><rect x="0" y="10" width="10" height="2" fill="#000"/><rect x="1" y="10" width="1" height="1" fill="#00ff00"/><rect x="2" y="10" width="7" height="1" fill="#a0a0a0"/></svg>
<div class="c" style="left:56px;top:385px;">ENQ</div>
<div class="c" style="left:113px;top:385px;">4E7B</div>
<div class="c" style="left:155px;top:385px;">100B3</div>
<div class="c" style="left:192px;top:385px;width:60px;text-align:right;">0</div>
<div class="c" style="left:255px;top:385px;width:60px;text-align:right;">19</div>
<div class="c" style="left:318px;top:385px;width:60px;text-align:right;">10</div>
<div class="c" style="left:395px;top:385px;width:60px;text-align:right;">1</div>
<div class="c" style="left:469px;top:385px;">MEMBER</div>
<div class="c" style="left:533px;top:385px;">03-Apr-2002 14:24</div>
<svg style="position:absolute;left:20px;top:402px" width="12" height="15" shape-rendering="crispEdges"><rect x="2" y="0" width="4" height="1" fill="#000"/><rect x="1" y="1" width="1" height="1" fill="#000"/><rect x="6" y="1" width="1" height="1" fill="#000"/><rect x="0" y="2" width="1" height="4" fill="#000"/><rect x="7" y="2" width="1" height="4" fill="#000"/><rect x="1" y="6" width="1" height="1" fill="#000"/><rect x="6" y="6" width="1" height="1" fill="#000"/><rect x="2" y="7" width="4" height="1" fill="#000"/><rect x="2" y="1" width="4" height="1" fill="#9999cc"/><rect x="1" y="2" width="1" height="4" fill="#9999cc"/><rect x="6" y="2" width="1" height="4" fill="#9999cc"/><rect x="2" y="6" width="4" height="1" fill="#9999cc"/><rect x="2" y="2" width="4" height="4" fill="#ccccff"/><rect x="5" y="2" width="1" height="1" fill="#eeeeff"/><rect x="3" y="3" width="2" height="2" fill="#000"/><rect x="8" y="3" width="4" height="2" fill="#000"/><rect x="4" y="9" width="1" height="6" fill="#ccccff"/></svg>
<svg style="position:absolute;left:40px;top:402px" width="10" height="12" shape-rendering="crispEdges"><rect x="1" y="1" width="7" height="1" fill="#000"/><rect x="1" y="2" width="1" height="4" fill="#000"/><rect x="2" y="2" width="5" height="4" fill="#008080"/><rect x="2" y="2" width="1" height="1" fill="#00ffff"/><rect x="7" y="2" width="1" height="5" fill="#d8d8d8"/><rect x="8" y="1" width="1" height="7" fill="#000"/><rect x="0" y="6" width="1" height="1" fill="#c0c0c0"/><rect x="1" y="6" width="6" height="1" fill="#ffffff"/><rect x="1" y="7" width="7" height="1" fill="#000"/><rect x="4" y="8" width="2" height="1" fill="#000"/><rect x="0" y="10" width="10" height="2" fill="#000"/><rect x="1" y="10" width="1" height="1" fill="#00ff00"/><rect x="2" y="10" width="7" height="1" fill="#a0a0a0"/></svg>
<div class="c" style="left:56px;top:401px;">FLAM97</div>
<div class="c" style="left:113px;top:401px;">4D9F</div>
<div class="c" style="left:155px;top:401px;">100A3</div>
<div class="c" style="left:192px;top:401px;width:60px;text-align:right;">0</div>
<div class="c" style="left:255px;top:401px;width:60px;text-align:right;">19</div>
<div class="c" style="left:318px;top:401px;width:60px;text-align:right;">10</div>
<div class="c" style="left:395px;top:401px;width:60px;text-align:right;">0</div>
<div class="c" style="left:469px;top:401px;">MEMBER</div>
<div class="c" style="left:533px;top:401px;">03-Apr-2002 11:32</div>
<svg style="position:absolute;left:20px;top:418px" width="12" height="15" shape-rendering="crispEdges"><rect x="2" y="0" width="4" height="1" fill="#000"/><rect x="1" y="1" width="1" height="1" fill="#000"/><rect x="6" y="1" width="1" height="1" fill="#000"/><rect x="0" y="2" width="1" height="4" fill="#000"/><rect x="7" y="2" width="1" height="4" fill="#000"/><rect x="1" y="6" width="1" height="1" fill="#000"/><rect x="6" y="6" width="1" height="1" fill="#000"/><rect x="2" y="7" width="4" height="1" fill="#000"/><rect x="2" y="1" width="4" height="1" fill="#9999cc"/><rect x="1" y="2" width="1" height="4" fill="#9999cc"/><rect x="6" y="2" width="1" height="4" fill="#9999cc"/><rect x="2" y="6" width="4" height="1" fill="#9999cc"/><rect x="2" y="2" width="4" height="4" fill="#ccccff"/><rect x="5" y="2" width="1" height="1" fill="#eeeeff"/><rect x="3" y="3" width="2" height="2" fill="#000"/><rect x="8" y="3" width="4" height="2" fill="#000"/><rect x="4" y="9" width="1" height="6" fill="#ccccff"/></svg>
<svg style="position:absolute;left:40px;top:418px" width="10" height="12" shape-rendering="crispEdges"><rect x="1" y="1" width="7" height="1" fill="#000"/><rect x="1" y="2" width="1" height="4" fill="#000"/><rect x="2" y="2" width="5" height="4" fill="#008080"/><rect x="2" y="2" width="1" height="1" fill="#00ffff"/><rect x="7" y="2" width="1" height="5" fill="#d8d8d8"/><rect x="8" y="1" width="1" height="7" fill="#000"/><rect x="0" y="6" width="1" height="1" fill="#c0c0c0"/><rect x="1" y="6" width="6" height="1" fill="#ffffff"/><rect x="1" y="7" width="7" height="1" fill="#000"/><rect x="4" y="8" width="2" height="1" fill="#000"/><rect x="0" y="10" width="10" height="2" fill="#000"/><rect x="1" y="10" width="1" height="1" fill="#00ff00"/><rect x="2" y="10" width="7" height="1" fill="#a0a0a0"/></svg>
<div class="c" style="left:56px;top:417px;">MNT1</div>
<div class="c" style="left:113px;top:417px;">4C1D</div>
<div class="c" style="left:155px;top:417px;">100B0</div>
<div class="c" style="left:192px;top:417px;width:60px;text-align:right;">1</div>
<div class="c" style="left:255px;top:417px;width:60px;text-align:right;">19</div>
<div class="c" style="left:318px;top:417px;width:60px;text-align:right;">10</div>
<div class="c" style="left:395px;top:417px;width:60px;text-align:right;">1</div>
<div class="c" style="left:469px;top:417px;">MEMBER</div>
<div class="c" style="left:533px;top:417px;">03-Apr-2002 13:20</div>
<svg style="position:absolute;left:20px;top:434px" width="12" height="15" shape-rendering="crispEdges"><rect x="2" y="0" width="4" height="1" fill="#000"/><rect x="1" y="1" width="1" height="1" fill="#000"/><rect x="6" y="1" width="1" height="1" fill="#000"/><rect x="0" y="2" width="1" height="4" fill="#000"/><rect x="7" y="2" width="1" height="4" fill="#000"/><rect x="1" y="6" width="1" height="1" fill="#000"/><rect x="6" y="6" width="1" height="1" fill="#000"/><rect x="2" y="7" width="4" height="1" fill="#000"/><rect x="2" y="1" width="4" height="1" fill="#9999cc"/><rect x="1" y="2" width="1" height="4" fill="#9999cc"/><rect x="6" y="2" width="1" height="4" fill="#9999cc"/><rect x="2" y="6" width="4" height="1" fill="#9999cc"/><rect x="2" y="2" width="4" height="4" fill="#ccccff"/><rect x="5" y="2" width="1" height="1" fill="#eeeeff"/><rect x="3" y="3" width="2" height="2" fill="#000"/><rect x="8" y="3" width="4" height="2" fill="#000"/><rect x="4" y="9" width="1" height="6" fill="#ccccff"/></svg>
<svg style="position:absolute;left:40px;top:434px" width="10" height="12" shape-rendering="crispEdges"><rect x="1" y="1" width="7" height="1" fill="#000"/><rect x="1" y="2" width="1" height="4" fill="#000"/><rect x="2" y="2" width="5" height="4" fill="#008080"/><rect x="2" y="2" width="1" height="1" fill="#00ffff"/><rect x="7" y="2" width="1" height="5" fill="#d8d8d8"/><rect x="8" y="1" width="1" height="7" fill="#000"/><rect x="0" y="6" width="1" height="1" fill="#c0c0c0"/><rect x="1" y="6" width="6" height="1" fill="#ffffff"/><rect x="1" y="7" width="7" height="1" fill="#000"/><rect x="4" y="8" width="2" height="1" fill="#000"/><rect x="0" y="10" width="10" height="2" fill="#000"/><rect x="1" y="10" width="1" height="1" fill="#00ff00"/><rect x="2" y="10" width="7" height="1" fill="#a0a0a0"/></svg>
<div class="c" style="left:56px;top:433px;">SABL2</div>
<div class="c" style="left:113px;top:433px;">4E7A</div>
<div class="c" style="left:155px;top:433px;">100A9</div>
<div class="c" style="left:192px;top:433px;width:60px;text-align:right;">1</div>
<div class="c" style="left:255px;top:433px;width:60px;text-align:right;">19</div>
<div class="c" style="left:318px;top:433px;width:60px;text-align:right;">10</div>
<div class="c" style="left:395px;top:433px;width:60px;text-align:right;">1</div>
<div class="c" style="left:469px;top:433px;">MEMBER</div>
<div class="c" style="left:533px;top:433px;">03-Apr-2002 11:42</div>
<svg style="position:absolute;left:20px;top:450px" width="12" height="15" shape-rendering="crispEdges"><rect x="2" y="0" width="4" height="1" fill="#000"/><rect x="1" y="1" width="1" height="1" fill="#000"/><rect x="6" y="1" width="1" height="1" fill="#000"/><rect x="0" y="2" width="1" height="4" fill="#000"/><rect x="7" y="2" width="1" height="4" fill="#000"/><rect x="1" y="6" width="1" height="1" fill="#000"/><rect x="6" y="6" width="1" height="1" fill="#000"/><rect x="2" y="7" width="4" height="1" fill="#000"/><rect x="2" y="1" width="4" height="1" fill="#9999cc"/><rect x="1" y="2" width="1" height="4" fill="#9999cc"/><rect x="6" y="2" width="1" height="4" fill="#9999cc"/><rect x="2" y="6" width="4" height="1" fill="#9999cc"/><rect x="2" y="2" width="4" height="4" fill="#ccccff"/><rect x="5" y="2" width="1" height="1" fill="#eeeeff"/><rect x="3" y="3" width="2" height="2" fill="#000"/><rect x="8" y="3" width="4" height="2" fill="#000"/><rect x="4" y="9" width="1" height="6" fill="#ccccff"/></svg>
<svg style="position:absolute;left:40px;top:450px" width="10" height="12" shape-rendering="crispEdges"><rect x="1" y="1" width="7" height="1" fill="#000"/><rect x="1" y="2" width="1" height="4" fill="#000"/><rect x="2" y="2" width="5" height="4" fill="#008080"/><rect x="2" y="2" width="1" height="1" fill="#00ffff"/><rect x="7" y="2" width="1" height="5" fill="#d8d8d8"/><rect x="8" y="1" width="1" height="7" fill="#000"/><rect x="0" y="6" width="1" height="1" fill="#c0c0c0"/><rect x="1" y="6" width="6" height="1" fill="#ffffff"/><rect x="1" y="7" width="7" height="1" fill="#000"/><rect x="4" y="8" width="2" height="1" fill="#000"/><rect x="0" y="10" width="10" height="2" fill="#000"/><rect x="1" y="10" width="1" height="1" fill="#00ff00"/><rect x="2" y="10" width="7" height="1" fill="#a0a0a0"/></svg>
<div class="c" style="left:56px;top:449px;">SGRP0P</div>
<div class="c" style="left:113px;top:449px;">4E82</div>
<div class="c" style="left:155px;top:449px;">100A1</div>
<div class="c" style="left:192px;top:449px;width:60px;text-align:right;">1</div>
<div class="c" style="left:255px;top:449px;width:60px;text-align:right;">19</div>
<div class="c" style="left:318px;top:449px;width:60px;text-align:right;">10</div>
<div class="c" style="left:395px;top:449px;width:60px;text-align:right;">5</div>
<div class="c" style="left:469px;top:449px;">MEMBER</div>
<div class="c" style="left:533px;top:449px;">03-Apr-2002 11:23</div>
<svg style="position:absolute;left:20px;top:466px" width="12" height="15" shape-rendering="crispEdges"><rect x="2" y="0" width="4" height="1" fill="#000"/><rect x="1" y="1" width="1" height="1" fill="#000"/><rect x="6" y="1" width="1" height="1" fill="#000"/><rect x="0" y="2" width="1" height="4" fill="#000"/><rect x="7" y="2" width="1" height="4" fill="#000"/><rect x="1" y="6" width="1" height="1" fill="#000"/><rect x="6" y="6" width="1" height="1" fill="#000"/><rect x="2" y="7" width="4" height="1" fill="#000"/><rect x="2" y="1" width="4" height="1" fill="#9999cc"/><rect x="1" y="2" width="1" height="4" fill="#9999cc"/><rect x="6" y="2" width="1" height="4" fill="#9999cc"/><rect x="2" y="6" width="4" height="1" fill="#9999cc"/><rect x="2" y="2" width="4" height="4" fill="#ccccff"/><rect x="5" y="2" width="1" height="1" fill="#eeeeff"/><rect x="3" y="3" width="2" height="2" fill="#000"/><rect x="8" y="3" width="4" height="2" fill="#000"/><rect x="4" y="9" width="1" height="6" fill="#ccccff"/></svg>
<svg style="position:absolute;left:40px;top:466px" width="10" height="12" shape-rendering="crispEdges"><rect x="1" y="1" width="7" height="1" fill="#000"/><rect x="1" y="2" width="1" height="4" fill="#000"/><rect x="2" y="2" width="5" height="4" fill="#008080"/><rect x="2" y="2" width="1" height="1" fill="#00ffff"/><rect x="7" y="2" width="1" height="5" fill="#d8d8d8"/><rect x="8" y="1" width="1" height="7" fill="#000"/><rect x="0" y="6" width="1" height="1" fill="#c0c0c0"/><rect x="1" y="6" width="6" height="1" fill="#ffffff"/><rect x="1" y="7" width="7" height="1" fill="#000"/><rect x="4" y="8" width="2" height="1" fill="#000"/><rect x="0" y="10" width="10" height="2" fill="#000"/><rect x="1" y="10" width="1" height="1" fill="#00ff00"/><rect x="2" y="10" width="7" height="1" fill="#a0a0a0"/></svg>
<div class="c" style="left:56px;top:465px;">SPNKY</div>
<div class="c" style="left:113px;top:465px;">4E84</div>
<div class="c" style="left:155px;top:465px;">1009E</div>
<div class="c" style="left:192px;top:465px;width:60px;text-align:right;">1</div>
<div class="c" style="left:255px;top:465px;width:60px;text-align:right;">19</div>
<div class="c" style="left:318px;top:465px;width:60px;text-align:right;">10</div>
<div class="c" style="left:395px;top:465px;width:60px;text-align:right;">9</div>
<div class="c" style="left:469px;top:465px;">MEMBER</div>
<div class="c" style="left:533px;top:465px;">03-Apr-2002 11:20</div>
<svg style="position:absolute;left:20px;top:482px" width="12" height="15" shape-rendering="crispEdges"><rect x="2" y="0" width="4" height="1" fill="#000"/><rect x="1" y="1" width="1" height="1" fill="#000"/><rect x="6" y="1" width="1" height="1" fill="#000"/><rect x="0" y="2" width="1" height="4" fill="#000"/><rect x="7" y="2" width="1" height="4" fill="#000"/><rect x="1" y="6" width="1" height="1" fill="#000"/><rect x="6" y="6" width="1" height="1" fill="#000"/><rect x="2" y="7" width="4" height="1" fill="#000"/><rect x="2" y="1" width="4" height="1" fill="#9999cc"/><rect x="1" y="2" width="1" height="4" fill="#9999cc"/><rect x="6" y="2" width="1" height="4" fill="#9999cc"/><rect x="2" y="6" width="4" height="1" fill="#9999cc"/><rect x="2" y="2" width="4" height="4" fill="#ccccff"/><rect x="5" y="2" width="1" height="1" fill="#eeeeff"/><rect x="3" y="3" width="2" height="2" fill="#000"/><rect x="8" y="3" width="4" height="2" fill="#000"/><rect x="4" y="9" width="1" height="6" fill="#ccccff"/></svg>
<svg style="position:absolute;left:40px;top:482px" width="10" height="12" shape-rendering="crispEdges"><rect x="1" y="1" width="7" height="1" fill="#000"/><rect x="1" y="2" width="1" height="4" fill="#000"/><rect x="2" y="2" width="5" height="4" fill="#008080"/><rect x="2" y="2" width="1" height="1" fill="#00ffff"/><rect x="7" y="2" width="1" height="5" fill="#d8d8d8"/><rect x="8" y="1" width="1" height="7" fill="#000"/><rect x="0" y="6" width="1" height="1" fill="#c0c0c0"/><rect x="1" y="6" width="6" height="1" fill="#ffffff"/><rect x="1" y="7" width="7" height="1" fill="#000"/><rect x="4" y="8" width="2" height="1" fill="#000"/><rect x="0" y="10" width="10" height="2" fill="#000"/><rect x="1" y="10" width="1" height="1" fill="#00ff00"/><rect x="2" y="10" width="7" height="1" fill="#a0a0a0"/></svg>
<div class="c" style="left:56px;top:481px;">SPNKY2</div>
<div class="c" style="left:113px;top:481px;">4EE9</div>
<div class="c" style="left:155px;top:481px;">1009F</div>
<div class="c" style="left:192px;top:481px;width:60px;text-align:right;">1</div>
<div class="c" style="left:255px;top:481px;width:60px;text-align:right;">19</div>
<div class="c" style="left:318px;top:481px;width:60px;text-align:right;">10</div>
<div class="c" style="left:395px;top:481px;width:60px;text-align:right;">8</div>
<div class="c" style="left:469px;top:481px;">MEMBER</div>
<div class="c" style="left:533px;top:481px;">03-Apr-2002 11:21</div>
<svg style="position:absolute;left:20px;top:498px" width="12" height="15" shape-rendering="crispEdges"><rect x="2" y="0" width="4" height="1" fill="#000"/><rect x="1" y="1" width="1" height="1" fill="#000"/><rect x="6" y="1" width="1" height="1" fill="#000"/><rect x="0" y="2" width="1" height="4" fill="#000"/><rect x="7" y="2" width="1" height="4" fill="#000"/><rect x="1" y="6" width="1" height="1" fill="#000"/><rect x="6" y="6" width="1" height="1" fill="#000"/><rect x="2" y="7" width="4" height="1" fill="#000"/><rect x="2" y="1" width="4" height="1" fill="#9999cc"/><rect x="1" y="2" width="1" height="4" fill="#9999cc"/><rect x="6" y="2" width="1" height="4" fill="#9999cc"/><rect x="2" y="6" width="4" height="1" fill="#9999cc"/><rect x="2" y="2" width="4" height="4" fill="#ccccff"/><rect x="5" y="2" width="1" height="1" fill="#eeeeff"/><rect x="3" y="3" width="2" height="2" fill="#000"/><rect x="8" y="3" width="4" height="2" fill="#000"/><rect x="4" y="9" width="1" height="6" fill="#ccccff"/></svg>
<svg style="position:absolute;left:40px;top:498px" width="10" height="12" shape-rendering="crispEdges"><rect x="1" y="1" width="7" height="1" fill="#000"/><rect x="1" y="2" width="1" height="4" fill="#000"/><rect x="2" y="2" width="5" height="4" fill="#008080"/><rect x="2" y="2" width="1" height="1" fill="#00ffff"/><rect x="7" y="2" width="1" height="5" fill="#d8d8d8"/><rect x="8" y="1" width="1" height="7" fill="#000"/><rect x="0" y="6" width="1" height="1" fill="#c0c0c0"/><rect x="1" y="6" width="6" height="1" fill="#ffffff"/><rect x="1" y="7" width="7" height="1" fill="#000"/><rect x="4" y="8" width="2" height="1" fill="#000"/><rect x="0" y="10" width="10" height="2" fill="#000"/><rect x="1" y="10" width="1" height="1" fill="#00ff00"/><rect x="2" y="10" width="7" height="1" fill="#a0a0a0"/></svg>
<div class="c" style="left:56px;top:497px;">SPNKY3</div>
<div class="c" style="left:113px;top:497px;">4F14</div>
<div class="c" style="left:155px;top:497px;">1009D</div>
<div class="c" style="left:192px;top:497px;width:60px;text-align:right;">1</div>
<div class="c" style="left:255px;top:497px;width:60px;text-align:right;">19</div>
<div class="c" style="left:318px;top:497px;width:60px;text-align:right;">10</div>
<div class="c" style="left:395px;top:497px;width:60px;text-align:right;">8</div>
<div class="c" style="left:469px;top:497px;">MEMBER</div>
<div class="c" style="left:533px;top:497px;">03-Apr-2002 11:19</div>
<svg style="position:absolute;left:20px;top:514px" width="12" height="15" shape-rendering="crispEdges"><rect x="2" y="0" width="4" height="1" fill="#000"/><rect x="1" y="1" width="1" height="1" fill="#000"/><rect x="6" y="1" width="1" height="1" fill="#000"/><rect x="0" y="2" width="1" height="4" fill="#000"/><rect x="7" y="2" width="1" height="4" fill="#000"/><rect x="1" y="6" width="1" height="1" fill="#000"/><rect x="6" y="6" width="1" height="1" fill="#000"/><rect x="2" y="7" width="4" height="1" fill="#000"/><rect x="2" y="1" width="4" height="1" fill="#9999cc"/><rect x="1" y="2" width="1" height="4" fill="#9999cc"/><rect x="6" y="2" width="1" height="4" fill="#9999cc"/><rect x="2" y="6" width="4" height="1" fill="#9999cc"/><rect x="2" y="2" width="4" height="4" fill="#ccccff"/><rect x="5" y="2" width="1" height="1" fill="#eeeeff"/><rect x="3" y="3" width="2" height="2" fill="#000"/><rect x="8" y="3" width="4" height="2" fill="#000"/><rect x="4" y="9" width="1" height="6" fill="#ccccff"/></svg>
<svg style="position:absolute;left:40px;top:514px" width="10" height="12" shape-rendering="crispEdges"><rect x="1" y="1" width="7" height="1" fill="#000"/><rect x="1" y="2" width="1" height="4" fill="#000"/><rect x="2" y="2" width="5" height="4" fill="#008080"/><rect x="2" y="2" width="1" height="1" fill="#00ffff"/><rect x="7" y="2" width="1" height="5" fill="#d8d8d8"/><rect x="8" y="1" width="1" height="7" fill="#000"/><rect x="0" y="6" width="1" height="1" fill="#c0c0c0"/><rect x="1" y="6" width="6" height="1" fill="#ffffff"/><rect x="1" y="7" width="7" height="1" fill="#000"/><rect x="4" y="8" width="2" height="1" fill="#000"/><rect x="0" y="10" width="10" height="2" fill="#000"/><rect x="1" y="10" width="1" height="1" fill="#00ff00"/><rect x="2" y="10" width="7" height="1" fill="#a0a0a0"/></svg>
<div class="c" style="left:56px;top:513px;">VMSTS4</div>
<div class="c" style="left:113px;top:513px;">4E80</div>
<div class="c" style="left:155px;top:513px;">100A0</div>
<div class="c" style="left:192px;top:513px;width:60px;text-align:right;">1</div>
<div class="c" style="left:255px;top:513px;width:60px;text-align:right;">19</div>
<div class="c" style="left:318px;top:513px;width:60px;text-align:right;">10</div>
<div class="c" style="left:395px;top:513px;width:60px;text-align:right;">1</div>
<div class="c" style="left:469px;top:513px;">MEMBER</div>
<div class="c" style="left:533px;top:513px;">03-Apr-2002 11:22</div>
<svg style="position:absolute;left:20px;top:530px" width="12" height="15" shape-rendering="crispEdges"><rect x="2" y="0" width="4" height="1" fill="#000"/><rect x="1" y="1" width="1" height="1" fill="#000"/><rect x="6" y="1" width="1" height="1" fill="#000"/><rect x="0" y="2" width="1" height="4" fill="#000"/><rect x="7" y="2" width="1" height="4" fill="#000"/><rect x="1" y="6" width="1" height="1" fill="#000"/><rect x="6" y="6" width="1" height="1" fill="#000"/><rect x="2" y="7" width="4" height="1" fill="#000"/><rect x="2" y="1" width="4" height="1" fill="#9999cc"/><rect x="1" y="2" width="1" height="4" fill="#9999cc"/><rect x="6" y="2" width="1" height="4" fill="#9999cc"/><rect x="2" y="6" width="4" height="1" fill="#9999cc"/><rect x="2" y="2" width="4" height="4" fill="#ccccff"/><rect x="5" y="2" width="1" height="1" fill="#eeeeff"/><rect x="3" y="3" width="2" height="2" fill="#000"/><rect x="8" y="3" width="4" height="2" fill="#000"/><rect x="4" y="9" width="1" height="4" fill="#ccccff"/></svg>
<svg style="position:absolute;left:40px;top:530px" width="10" height="12" shape-rendering="crispEdges"><rect x="1" y="1" width="7" height="1" fill="#000"/><rect x="1" y="2" width="1" height="4" fill="#000"/><rect x="2" y="2" width="5" height="4" fill="#008080"/><rect x="2" y="2" width="1" height="1" fill="#00ffff"/><rect x="7" y="2" width="1" height="5" fill="#d8d8d8"/><rect x="8" y="1" width="1" height="7" fill="#000"/><rect x="0" y="6" width="1" height="1" fill="#c0c0c0"/><rect x="1" y="6" width="6" height="1" fill="#ffffff"/><rect x="1" y="7" width="7" height="1" fill="#000"/><rect x="4" y="8" width="2" height="1" fill="#000"/><rect x="0" y="10" width="10" height="2" fill="#000"/><rect x="1" y="10" width="1" height="1" fill="#00ff00"/><rect x="2" y="10" width="7" height="1" fill="#a0a0a0"/></svg>
<div class="c" style="left:56px;top:529px;">WILD3</div>
<div class="c" style="left:113px;top:529px;">4E0B</div>
<div class="c" style="left:155px;top:529px;">100AC</div>
<div class="c" style="left:192px;top:529px;width:60px;text-align:right;">1</div>
<div class="c" style="left:255px;top:529px;width:60px;text-align:right;">19</div>
<div class="c" style="left:318px;top:529px;width:60px;text-align:right;">10</div>
<div class="c" style="left:395px;top:529px;width:60px;text-align:right;">1</div>
<div class="c" style="left:469px;top:529px;">MEMBER</div>
<div class="c" style="left:533px;top:529px;">03-Apr-2002 13:00</div>
<div style="position:absolute;left:708px;top:269px;width:16px;height:17px;background:#ffffff"></div>
<div style="position:absolute;left:709px;top:287px;width:16px;height:256px;background:#666666"></div>
<div style="position:absolute;left:710px;top:288px;width:14px;height:254px;background:#cccccc"></div>
<div style="position:absolute;left:710px;top:288px;width:14px;height:14px;background:#ffffff"></div>
<div style="position:absolute;left:711px;top:289px;width:13px;height:13px;background:#cccccc"></div>
<svg style="position:absolute;left:713px;top:293px" width="9" height="5" shape-rendering="crispEdges"><polygon points="4,0 5,0 9,5 0,5" fill="#000"/></svg>
<div style="position:absolute;left:709px;top:302px;width:16px;height:190px;background:#666699"></div>
<div style="position:absolute;left:710px;top:303px;width:14px;height:188px;background:#ccccff"></div>
<div style="position:absolute;left:711px;top:304px;width:13px;height:187px;background:#9999cc"></div>
<div style="position:absolute;left:724px;top:302px;width:1px;height:190px;background:#666666"></div>
<svg style="position:absolute;left:712px;top:305px" width="11" height="185" shape-rendering="crispEdges"><rect x="0" y="0" width="1" height="1" fill="#ccccff"/><rect x="1" y="1" width="1" height="1" fill="#666699"/><rect x="2" y="2" width="1" height="1" fill="#ccccff"/><rect x="3" y="3" width="1" height="1" fill="#666699"/><rect x="4" y="0" width="1" height="1" fill="#ccccff"/><rect x="5" y="1" width="1" height="1" fill="#666699"/><rect x="6" y="2" width="1" height="1" fill="#ccccff"/><rect x="7" y="3" width="1" height="1" fill="#666699"/><rect x="8" y="0" width="1" height="1" fill="#ccccff"/><rect x="9" y="1" width="1" height="1" fill="#666699"/><rect x="10" y="2" width="1" height="1" fill="#ccccff"/><rect x="11" y="3" width="1" height="1" fill="#666699"/><rect x="0" y="4" width="1" height="1" fill="#ccccff"/><rect x="1" y="5" width="1" height="1" fill="#666699"/><rect x="2" y="6" width="1" height="1" fill="#ccccff"/><rect x="3" y="7" width="1" height="1" fill="#666699"/><rect x="4" y="4" width="1" height="1" fill="#ccccff"/><rect x="5" y="5" width="1" height="1" fill="#666699"/><rect x="6" y="6" width="1" height="1" fill="#ccccff"/><rect x="7" y="7" width="1" height="1" fill="#666699"/><rect x="8" y="4" width="1" height="1" fill="#ccccff"/><rect x="9" y="5" width="1" height="1" fill="#666699"/><rect x="10" y="6" width="1" height="1" fill="#ccccff"/><rect x="11" y="7" width="1" height="1" fill="#666699"/><rect x="0" y="8" width="1" height="1" fill="#ccccff"/><rect x="1" y="9" width="1" height="1" fill="#666699"/><rect x="2" y="10" width="1" height="1" fill="#ccccff"/><rect x="3" y="11" width="1" height="1" fill="#666699"/><rect x="4" y="8" width="1" height="1" fill="#ccccff"/><rect x="5" y="9" width="1" height="1" fill="#666699"/><rect x="6" y="10" width="1" height="1" fill="#ccccff"/><rect x="7" y="11" width="1" height="1" fill="#666699"/><rect x="8" y="8" width="1" height="1" fill="#ccccff"/><rect x="9" y="9" width="1" height="1" fill="#666699"/><rect x="10" y="10" width="1" height="1" fill="#ccccff"/><rect x="11" y="11" width="1" height="1" fill="#666699"/><rect x="0" y="12" width="1" height="1" fill="#ccccff"/><rect x="1" y="13" width="1" height="1" fill="#666699"/><rect x="2" y="14" width="1" height="1" fill="#ccccff"/><rect x="3" y="15" width="1" height="1" fill="#666699"/><rect x="4" y="12" width="1" height="1" fill="#ccccff"/><rect x="5" y="13" width="1" height="1" fill="#666699"/><rect x="6" y="14" width="1" height="1" fill="#ccccff"/><rect x="7" y="15" width="1" height="1" fill="#666699"/><rect x="8" y="12" width="1" height="1" fill="#ccccff"/><rect x="9" y="13" width="1" height="1" fill="#666699"/><rect x="10" y="14" width="1" height="1" fill="#ccccff"/><rect x="11" y="15" width="1" height="1" fill="#666699"/><rect x="0" y="16" width="1" height="1" fill="#ccccff"/><rect x="1" y="17" width="1" height="1" fill="#666699"/><rect x="2" y="18" width="1" height="1" fill="#ccccff"/><rect x="3" y="19" width="1" height="1" fill="#666699"/><rect x="4" y="16" width="1" height="1" fill="#ccccff"/><rect x="5" y="17" width="1" height="1" fill="#666699"/><rect x="6" y="18" width="1" height="1" fill="#ccccff"/><rect x="7" y="19" width="1" height="1" fill="#666699"/><rect x="8" y="16" width="1" height="1" fill="#ccccff"/><rect x="9" y="17" width="1" height="1" fill="#666699"/><rect x="10" y="18" width="1" height="1" fill="#ccccff"/><rect x="11" y="19" width="1" height="1" fill="#666699"/><rect x="0" y="20" width="1" height="1" fill="#ccccff"/><rect x="1" y="21" width="1" height="1" fill="#666699"/><rect x="2" y="22" width="1" height="1" fill="#ccccff"/><rect x="3" y="23" width="1" height="1" fill="#666699"/><rect x="4" y="20" width="1" height="1" fill="#ccccff"/><rect x="5" y="21" width="1" height="1" fill="#666699"/><rect x="6" y="22" width="1" height="1" fill="#ccccff"/><rect x="7" y="23" width="1" height="1" fill="#666699"/><rect x="8" y="20" width="1" height="1" fill="#ccccff"/><rect x="9" y="21" width="1" height="1" fill="#666699"/><rect x="10" y="22" width="1" height="1" fill="#ccccff"/><rect x="11" y="23" width="1" height="1" fill="#666699"/><rect x="0" y="24" width="1" height="1" fill="#ccccff"/><rect x="1" y="25" width="1" height="1" fill="#666699"/><rect x="2" y="26" width="1" height="1" fill="#ccccff"/><rect x="3" y="27" width="1" height="1" fill="#666699"/><rect x="4" y="24" width="1" height="1" fill="#ccccff"/><rect x="5" y="25" width="1" height="1" fill="#666699"/><rect x="6" y="26" width="1" height="1" fill="#ccccff"/><rect x="7" y="27" width="1" height="1" fill="#666699"/><rect x="8" y="24" width="1" height="1" fill="#ccccff"/><rect x="9" y="25" width="1" height="1" fill="#666699"/><rect x="10" y="26" width="1" height="1" fill="#ccccff"/><rect x="11" y="27" width="1" height="1" fill="#666699"/><rect x="0" y="28" width="1" height="1" fill="#ccccff"/><rect x="1" y="29" width="1" height="1" fill="#666699"/><rect x="2" y="30" width="1" height="1" fill="#ccccff"/><rect x="3" y="31" width="1" height="1" fill="#666699"/><rect x="4" y="28" width="1" height="1" fill="#ccccff"/><rect x="5" y="29" width="1" height="1" fill="#666699"/><rect x="6" y="30" width="1" height="1" fill="#ccccff"/><rect x="7" y="31" width="1" height="1" fill="#666699"/><rect x="8" y="28" width="1" height="1" fill="#ccccff"/><rect x="9" y="29" width="1" height="1" fill="#666699"/><rect x="10" y="30" width="1" height="1" fill="#ccccff"/><rect x="11" y="31" width="1" height="1" fill="#666699"/><rect x="0" y="32" width="1" height="1" fill="#ccccff"/><rect x="1" y="33" width="1" height="1" fill="#666699"/><rect x="2" y="34" width="1" height="1" fill="#ccccff"/><rect x="3" y="35" width="1" height="1" fill="#666699"/><rect x="4" y="32" width="1" height="1" fill="#ccccff"/><rect x="5" y="33" width="1" height="1" fill="#666699"/><rect x="6" y="34" width="1" height="1" fill="#ccccff"/><rect x="7" y="35" width="1" height="1" fill="#666699"/><rect x="8" y="32" width="1" height="1" fill="#ccccff"/><rect x="9" y="33" width="1" height="1" fill="#666699"/><rect x="10" y="34" width="1" height="1" fill="#ccccff"/><rect x="11" y="35" width="1" height="1" fill="#666699"/><rect x="0" y="36" width="1" height="1" fill="#ccccff"/><rect x="1" y="37" width="1" height="1" fill="#666699"/><rect x="2" y="38" width="1" height="1" fill="#ccccff"/><rect x="3" y="39" width="1" height="1" fill="#666699"/><rect x="4" y="36" width="1" height="1" fill="#ccccff"/><rect x="5" y="37" width="1" height="1" fill="#666699"/><rect x="6" y="38" width="1" height="1" fill="#ccccff"/><rect x="7" y="39" width="1" height="1" fill="#666699"/><rect x="8" y="36" width="1" height="1" fill="#ccccff"/><rect x="9" y="37" width="1" height="1" fill="#666699"/><rect x="10" y="38" width="1" height="1" fill="#ccccff"/><rect x="11" y="39" width="1" height="1" fill="#666699"/><rect x="0" y="40" width="1" height="1" fill="#ccccff"/><rect x="1" y="41" width="1" height="1" fill="#666699"/><rect x="2" y="42" width="1" height="1" fill="#ccccff"/><rect x="3" y="43" width="1" height="1" fill="#666699"/><rect x="4" y="40" width="1" height="1" fill="#ccccff"/><rect x="5" y="41" width="1" height="1" fill="#666699"/><rect x="6" y="42" width="1" height="1" fill="#ccccff"/><rect x="7" y="43" width="1" height="1" fill="#666699"/><rect x="8" y="40" width="1" height="1" fill="#ccccff"/><rect x="9" y="41" width="1" height="1" fill="#666699"/><rect x="10" y="42" width="1" height="1" fill="#ccccff"/><rect x="11" y="43" width="1" height="1" fill="#666699"/><rect x="0" y="44" width="1" height="1" fill="#ccccff"/><rect x="1" y="45" width="1" height="1" fill="#666699"/><rect x="2" y="46" width="1" height="1" fill="#ccccff"/><rect x="3" y="47" width="1" height="1" fill="#666699"/><rect x="4" y="44" width="1" height="1" fill="#ccccff"/><rect x="5" y="45" width="1" height="1" fill="#666699"/><rect x="6" y="46" width="1" height="1" fill="#ccccff"/><rect x="7" y="47" width="1" height="1" fill="#666699"/><rect x="8" y="44" width="1" height="1" fill="#ccccff"/><rect x="9" y="45" width="1" height="1" fill="#666699"/><rect x="10" y="46" width="1" height="1" fill="#ccccff"/><rect x="11" y="47" width="1" height="1" fill="#666699"/><rect x="0" y="48" width="1" height="1" fill="#ccccff"/><rect x="1" y="49" width="1" height="1" fill="#666699"/><rect x="2" y="50" width="1" height="1" fill="#ccccff"/><rect x="3" y="51" width="1" height="1" fill="#666699"/><rect x="4" y="48" width="1" height="1" fill="#ccccff"/><rect x="5" y="49" width="1" height="1" fill="#666699"/><rect x="6" y="50" width="1" height="1" fill="#ccccff"/><rect x="7" y="51" width="1" height="1" fill="#666699"/><rect x="8" y="48" width="1" height="1" fill="#ccccff"/><rect x="9" y="49" width="1" height="1" fill="#666699"/><rect x="10" y="50" width="1" height="1" fill="#ccccff"/><rect x="11" y="51" width="1" height="1" fill="#666699"/><rect x="0" y="52" width="1" height="1" fill="#ccccff"/><rect x="1" y="53" width="1" height="1" fill="#666699"/><rect x="2" y="54" width="1" height="1" fill="#ccccff"/><rect x="3" y="55" width="1" height="1" fill="#666699"/><rect x="4" y="52" width="1" height="1" fill="#ccccff"/><rect x="5" y="53" width="1" height="1" fill="#666699"/><rect x="6" y="54" width="1" height="1" fill="#ccccff"/><rect x="7" y="55" width="1" height="1" fill="#666699"/><rect x="8" y="52" width="1" height="1" fill="#ccccff"/><rect x="9" y="53" width="1" height="1" fill="#666699"/><rect x="10" y="54" width="1" height="1" fill="#ccccff"/><rect x="11" y="55" width="1" height="1" fill="#666699"/><rect x="0" y="56" width="1" height="1" fill="#ccccff"/><rect x="1" y="57" width="1" height="1" fill="#666699"/><rect x="2" y="58" width="1" height="1" fill="#ccccff"/><rect x="3" y="59" width="1" height="1" fill="#666699"/><rect x="4" y="56" width="1" height="1" fill="#ccccff"/><rect x="5" y="57" width="1" height="1" fill="#666699"/><rect x="6" y="58" width="1" height="1" fill="#ccccff"/><rect x="7" y="59" width="1" height="1" fill="#666699"/><rect x="8" y="56" width="1" height="1" fill="#ccccff"/><rect x="9" y="57" width="1" height="1" fill="#666699"/><rect x="10" y="58" width="1" height="1" fill="#ccccff"/><rect x="11" y="59" width="1" height="1" fill="#666699"/><rect x="0" y="60" width="1" height="1" fill="#ccccff"/><rect x="1" y="61" width="1" height="1" fill="#666699"/><rect x="2" y="62" width="1" height="1" fill="#ccccff"/><rect x="3" y="63" width="1" height="1" fill="#666699"/><rect x="4" y="60" width="1" height="1" fill="#ccccff"/><rect x="5" y="61" width="1" height="1" fill="#666699"/><rect x="6" y="62" width="1" height="1" fill="#ccccff"/><rect x="7" y="63" width="1" height="1" fill="#666699"/><rect x="8" y="60" width="1" height="1" fill="#ccccff"/><rect x="9" y="61" width="1" height="1" fill="#666699"/><rect x="10" y="62" width="1" height="1" fill="#ccccff"/><rect x="11" y="63" width="1" height="1" fill="#666699"/><rect x="0" y="64" width="1" height="1" fill="#ccccff"/><rect x="1" y="65" width="1" height="1" fill="#666699"/><rect x="2" y="66" width="1" height="1" fill="#ccccff"/><rect x="3" y="67" width="1" height="1" fill="#666699"/><rect x="4" y="64" width="1" height="1" fill="#ccccff"/><rect x="5" y="65" width="1" height="1" fill="#666699"/><rect x="6" y="66" width="1" height="1" fill="#ccccff"/><rect x="7" y="67" width="1" height="1" fill="#666699"/><rect x="8" y="64" width="1" height="1" fill="#ccccff"/><rect x="9" y="65" width="1" height="1" fill="#666699"/><rect x="10" y="66" width="1" height="1" fill="#ccccff"/><rect x="11" y="67" width="1" height="1" fill="#666699"/><rect x="0" y="68" width="1" height="1" fill="#ccccff"/><rect x="1" y="69" width="1" height="1" fill="#666699"/><rect x="2" y="70" width="1" height="1" fill="#ccccff"/><rect x="3" y="71" width="1" height="1" fill="#666699"/><rect x="4" y="68" width="1" height="1" fill="#ccccff"/><rect x="5" y="69" width="1" height="1" fill="#666699"/><rect x="6" y="70" width="1" height="1" fill="#ccccff"/><rect x="7" y="71" width="1" height="1" fill="#666699"/><rect x="8" y="68" width="1" height="1" fill="#ccccff"/><rect x="9" y="69" width="1" height="1" fill="#666699"/><rect x="10" y="70" width="1" height="1" fill="#ccccff"/><rect x="11" y="71" width="1" height="1" fill="#666699"/><rect x="0" y="72" width="1" height="1" fill="#ccccff"/><rect x="1" y="73" width="1" height="1" fill="#666699"/><rect x="2" y="74" width="1" height="1" fill="#ccccff"/><rect x="3" y="75" width="1" height="1" fill="#666699"/><rect x="4" y="72" width="1" height="1" fill="#ccccff"/><rect x="5" y="73" width="1" height="1" fill="#666699"/><rect x="6" y="74" width="1" height="1" fill="#ccccff"/><rect x="7" y="75" width="1" height="1" fill="#666699"/><rect x="8" y="72" width="1" height="1" fill="#ccccff"/><rect x="9" y="73" width="1" height="1" fill="#666699"/><rect x="10" y="74" width="1" height="1" fill="#ccccff"/><rect x="11" y="75" width="1" height="1" fill="#666699"/><rect x="0" y="76" width="1" height="1" fill="#ccccff"/><rect x="1" y="77" width="1" height="1" fill="#666699"/><rect x="2" y="78" width="1" height="1" fill="#ccccff"/><rect x="3" y="79" width="1" height="1" fill="#666699"/><rect x="4" y="76" width="1" height="1" fill="#ccccff"/><rect x="5" y="77" width="1" height="1" fill="#666699"/><rect x="6" y="78" width="1" height="1" fill="#ccccff"/><rect x="7" y="79" width="1" height="1" fill="#666699"/><rect x="8" y="76" width="1" height="1" fill="#ccccff"/><rect x="9" y="77" width="1" height="1" fill="#666699"/><rect x="10" y="78" width="1" height="1" fill="#ccccff"/><rect x="11" y="79" width="1" height="1" fill="#666699"/><rect x="0" y="80" width="1" height="1" fill="#ccccff"/><rect x="1" y="81" width="1" height="1" fill="#666699"/><rect x="2" y="82" width="1" height="1" fill="#ccccff"/><rect x="3" y="83" width="1" height="1" fill="#666699"/><rect x="4" y="80" width="1" height="1" fill="#ccccff"/><rect x="5" y="81" width="1" height="1" fill="#666699"/><rect x="6" y="82" width="1" height="1" fill="#ccccff"/><rect x="7" y="83" width="1" height="1" fill="#666699"/><rect x="8" y="80" width="1" height="1" fill="#ccccff"/><rect x="9" y="81" width="1" height="1" fill="#666699"/><rect x="10" y="82" width="1" height="1" fill="#ccccff"/><rect x="11" y="83" width="1" height="1" fill="#666699"/><rect x="0" y="84" width="1" height="1" fill="#ccccff"/><rect x="1" y="85" width="1" height="1" fill="#666699"/><rect x="2" y="86" width="1" height="1" fill="#ccccff"/><rect x="3" y="87" width="1" height="1" fill="#666699"/><rect x="4" y="84" width="1" height="1" fill="#ccccff"/><rect x="5" y="85" width="1" height="1" fill="#666699"/><rect x="6" y="86" width="1" height="1" fill="#ccccff"/><rect x="7" y="87" width="1" height="1" fill="#666699"/><rect x="8" y="84" width="1" height="1" fill="#ccccff"/><rect x="9" y="85" width="1" height="1" fill="#666699"/><rect x="10" y="86" width="1" height="1" fill="#ccccff"/><rect x="11" y="87" width="1" height="1" fill="#666699"/><rect x="0" y="88" width="1" height="1" fill="#ccccff"/><rect x="1" y="89" width="1" height="1" fill="#666699"/><rect x="2" y="90" width="1" height="1" fill="#ccccff"/><rect x="3" y="91" width="1" height="1" fill="#666699"/><rect x="4" y="88" width="1" height="1" fill="#ccccff"/><rect x="5" y="89" width="1" height="1" fill="#666699"/><rect x="6" y="90" width="1" height="1" fill="#ccccff"/><rect x="7" y="91" width="1" height="1" fill="#666699"/><rect x="8" y="88" width="1" height="1" fill="#ccccff"/><rect x="9" y="89" width="1" height="1" fill="#666699"/><rect x="10" y="90" width="1" height="1" fill="#ccccff"/><rect x="11" y="91" width="1" height="1" fill="#666699"/><rect x="0" y="92" width="1" height="1" fill="#ccccff"/><rect x="1" y="93" width="1" height="1" fill="#666699"/><rect x="2" y="94" width="1" height="1" fill="#ccccff"/><rect x="3" y="95" width="1" height="1" fill="#666699"/><rect x="4" y="92" width="1" height="1" fill="#ccccff"/><rect x="5" y="93" width="1" height="1" fill="#666699"/><rect x="6" y="94" width="1" height="1" fill="#ccccff"/><rect x="7" y="95" width="1" height="1" fill="#666699"/><rect x="8" y="92" width="1" height="1" fill="#ccccff"/><rect x="9" y="93" width="1" height="1" fill="#666699"/><rect x="10" y="94" width="1" height="1" fill="#ccccff"/><rect x="11" y="95" width="1" height="1" fill="#666699"/><rect x="0" y="96" width="1" height="1" fill="#ccccff"/><rect x="1" y="97" width="1" height="1" fill="#666699"/><rect x="2" y="98" width="1" height="1" fill="#ccccff"/><rect x="3" y="99" width="1" height="1" fill="#666699"/><rect x="4" y="96" width="1" height="1" fill="#ccccff"/><rect x="5" y="97" width="1" height="1" fill="#666699"/><rect x="6" y="98" width="1" height="1" fill="#ccccff"/><rect x="7" y="99" width="1" height="1" fill="#666699"/><rect x="8" y="96" width="1" height="1" fill="#ccccff"/><rect x="9" y="97" width="1" height="1" fill="#666699"/><rect x="10" y="98" width="1" height="1" fill="#ccccff"/><rect x="11" y="99" width="1" height="1" fill="#666699"/><rect x="0" y="100" width="1" height="1" fill="#ccccff"/><rect x="1" y="101" width="1" height="1" fill="#666699"/><rect x="2" y="102" width="1" height="1" fill="#ccccff"/><rect x="3" y="103" width="1" height="1" fill="#666699"/><rect x="4" y="100" width="1" height="1" fill="#ccccff"/><rect x="5" y="101" width="1" height="1" fill="#666699"/><rect x="6" y="102" width="1" height="1" fill="#ccccff"/><rect x="7" y="103" width="1" height="1" fill="#666699"/><rect x="8" y="100" width="1" height="1" fill="#ccccff"/><rect x="9" y="101" width="1" height="1" fill="#666699"/><rect x="10" y="102" width="1" height="1" fill="#ccccff"/><rect x="11" y="103" width="1" height="1" fill="#666699"/><rect x="0" y="104" width="1" height="1" fill="#ccccff"/><rect x="1" y="105" width="1" height="1" fill="#666699"/><rect x="2" y="106" width="1" height="1" fill="#ccccff"/><rect x="3" y="107" width="1" height="1" fill="#666699"/><rect x="4" y="104" width="1" height="1" fill="#ccccff"/><rect x="5" y="105" width="1" height="1" fill="#666699"/><rect x="6" y="106" width="1" height="1" fill="#ccccff"/><rect x="7" y="107" width="1" height="1" fill="#666699"/><rect x="8" y="104" width="1" height="1" fill="#ccccff"/><rect x="9" y="105" width="1" height="1" fill="#666699"/><rect x="10" y="106" width="1" height="1" fill="#ccccff"/><rect x="11" y="107" width="1" height="1" fill="#666699"/><rect x="0" y="108" width="1" height="1" fill="#ccccff"/><rect x="1" y="109" width="1" height="1" fill="#666699"/><rect x="2" y="110" width="1" height="1" fill="#ccccff"/><rect x="3" y="111" width="1" height="1" fill="#666699"/><rect x="4" y="108" width="1" height="1" fill="#ccccff"/><rect x="5" y="109" width="1" height="1" fill="#666699"/><rect x="6" y="110" width="1" height="1" fill="#ccccff"/><rect x="7" y="111" width="1" height="1" fill="#666699"/><rect x="8" y="108" width="1" height="1" fill="#ccccff"/><rect x="9" y="109" width="1" height="1" fill="#666699"/><rect x="10" y="110" width="1" height="1" fill="#ccccff"/><rect x="11" y="111" width="1" height="1" fill="#666699"/><rect x="0" y="112" width="1" height="1" fill="#ccccff"/><rect x="1" y="113" width="1" height="1" fill="#666699"/><rect x="2" y="114" width="1" height="1" fill="#ccccff"/><rect x="3" y="115" width="1" height="1" fill="#666699"/><rect x="4" y="112" width="1" height="1" fill="#ccccff"/><rect x="5" y="113" width="1" height="1" fill="#666699"/><rect x="6" y="114" width="1" height="1" fill="#ccccff"/><rect x="7" y="115" width="1" height="1" fill="#666699"/><rect x="8" y="112" width="1" height="1" fill="#ccccff"/><rect x="9" y="113" width="1" height="1" fill="#666699"/><rect x="10" y="114" width="1" height="1" fill="#ccccff"/><rect x="11" y="115" width="1" height="1" fill="#666699"/><rect x="0" y="116" width="1" height="1" fill="#ccccff"/><rect x="1" y="117" width="1" height="1" fill="#666699"/><rect x="2" y="118" width="1" height="1" fill="#ccccff"/><rect x="3" y="119" width="1" height="1" fill="#666699"/><rect x="4" y="116" width="1" height="1" fill="#ccccff"/><rect x="5" y="117" width="1" height="1" fill="#666699"/><rect x="6" y="118" width="1" height="1" fill="#ccccff"/><rect x="7" y="119" width="1" height="1" fill="#666699"/><rect x="8" y="116" width="1" height="1" fill="#ccccff"/><rect x="9" y="117" width="1" height="1" fill="#666699"/><rect x="10" y="118" width="1" height="1" fill="#ccccff"/><rect x="11" y="119" width="1" height="1" fill="#666699"/><rect x="0" y="120" width="1" height="1" fill="#ccccff"/><rect x="1" y="121" width="1" height="1" fill="#666699"/><rect x="2" y="122" width="1" height="1" fill="#ccccff"/><rect x="3" y="123" width="1" height="1" fill="#666699"/><rect x="4" y="120" width="1" height="1" fill="#ccccff"/><rect x="5" y="121" width="1" height="1" fill="#666699"/><rect x="6" y="122" width="1" height="1" fill="#ccccff"/><rect x="7" y="123" width="1" height="1" fill="#666699"/><rect x="8" y="120" width="1" height="1" fill="#ccccff"/><rect x="9" y="121" width="1" height="1" fill="#666699"/><rect x="10" y="122" width="1" height="1" fill="#ccccff"/><rect x="11" y="123" width="1" height="1" fill="#666699"/><rect x="0" y="124" width="1" height="1" fill="#ccccff"/><rect x="1" y="125" width="1" height="1" fill="#666699"/><rect x="2" y="126" width="1" height="1" fill="#ccccff"/><rect x="3" y="127" width="1" height="1" fill="#666699"/><rect x="4" y="124" width="1" height="1" fill="#ccccff"/><rect x="5" y="125" width="1" height="1" fill="#666699"/><rect x="6" y="126" width="1" height="1" fill="#ccccff"/><rect x="7" y="127" width="1" height="1" fill="#666699"/><rect x="8" y="124" width="1" height="1" fill="#ccccff"/><rect x="9" y="125" width="1" height="1" fill="#666699"/><rect x="10" y="126" width="1" height="1" fill="#ccccff"/><rect x="11" y="127" width="1" height="1" fill="#666699"/><rect x="0" y="128" width="1" height="1" fill="#ccccff"/><rect x="1" y="129" width="1" height="1" fill="#666699"/><rect x="2" y="130" width="1" height="1" fill="#ccccff"/><rect x="3" y="131" width="1" height="1" fill="#666699"/><rect x="4" y="128" width="1" height="1" fill="#ccccff"/><rect x="5" y="129" width="1" height="1" fill="#666699"/><rect x="6" y="130" width="1" height="1" fill="#ccccff"/><rect x="7" y="131" width="1" height="1" fill="#666699"/><rect x="8" y="128" width="1" height="1" fill="#ccccff"/><rect x="9" y="129" width="1" height="1" fill="#666699"/><rect x="10" y="130" width="1" height="1" fill="#ccccff"/><rect x="11" y="131" width="1" height="1" fill="#666699"/><rect x="0" y="132" width="1" height="1" fill="#ccccff"/><rect x="1" y="133" width="1" height="1" fill="#666699"/><rect x="2" y="134" width="1" height="1" fill="#ccccff"/><rect x="3" y="135" width="1" height="1" fill="#666699"/><rect x="4" y="132" width="1" height="1" fill="#ccccff"/><rect x="5" y="133" width="1" height="1" fill="#666699"/><rect x="6" y="134" width="1" height="1" fill="#ccccff"/><rect x="7" y="135" width="1" height="1" fill="#666699"/><rect x="8" y="132" width="1" height="1" fill="#ccccff"/><rect x="9" y="133" width="1" height="1" fill="#666699"/><rect x="10" y="134" width="1" height="1" fill="#ccccff"/><rect x="11" y="135" width="1" height="1" fill="#666699"/><rect x="0" y="136" width="1" height="1" fill="#ccccff"/><rect x="1" y="137" width="1" height="1" fill="#666699"/><rect x="2" y="138" width="1" height="1" fill="#ccccff"/><rect x="3" y="139" width="1" height="1" fill="#666699"/><rect x="4" y="136" width="1" height="1" fill="#ccccff"/><rect x="5" y="137" width="1" height="1" fill="#666699"/><rect x="6" y="138" width="1" height="1" fill="#ccccff"/><rect x="7" y="139" width="1" height="1" fill="#666699"/><rect x="8" y="136" width="1" height="1" fill="#ccccff"/><rect x="9" y="137" width="1" height="1" fill="#666699"/><rect x="10" y="138" width="1" height="1" fill="#ccccff"/><rect x="11" y="139" width="1" height="1" fill="#666699"/><rect x="0" y="140" width="1" height="1" fill="#ccccff"/><rect x="1" y="141" width="1" height="1" fill="#666699"/><rect x="2" y="142" width="1" height="1" fill="#ccccff"/><rect x="3" y="143" width="1" height="1" fill="#666699"/><rect x="4" y="140" width="1" height="1" fill="#ccccff"/><rect x="5" y="141" width="1" height="1" fill="#666699"/><rect x="6" y="142" width="1" height="1" fill="#ccccff"/><rect x="7" y="143" width="1" height="1" fill="#666699"/><rect x="8" y="140" width="1" height="1" fill="#ccccff"/><rect x="9" y="141" width="1" height="1" fill="#666699"/><rect x="10" y="142" width="1" height="1" fill="#ccccff"/><rect x="11" y="143" width="1" height="1" fill="#666699"/><rect x="0" y="144" width="1" height="1" fill="#ccccff"/><rect x="1" y="145" width="1" height="1" fill="#666699"/><rect x="2" y="146" width="1" height="1" fill="#ccccff"/><rect x="3" y="147" width="1" height="1" fill="#666699"/><rect x="4" y="144" width="1" height="1" fill="#ccccff"/><rect x="5" y="145" width="1" height="1" fill="#666699"/><rect x="6" y="146" width="1" height="1" fill="#ccccff"/><rect x="7" y="147" width="1" height="1" fill="#666699"/><rect x="8" y="144" width="1" height="1" fill="#ccccff"/><rect x="9" y="145" width="1" height="1" fill="#666699"/><rect x="10" y="146" width="1" height="1" fill="#ccccff"/><rect x="11" y="147" width="1" height="1" fill="#666699"/><rect x="0" y="148" width="1" height="1" fill="#ccccff"/><rect x="1" y="149" width="1" height="1" fill="#666699"/><rect x="2" y="150" width="1" height="1" fill="#ccccff"/><rect x="3" y="151" width="1" height="1" fill="#666699"/><rect x="4" y="148" width="1" height="1" fill="#ccccff"/><rect x="5" y="149" width="1" height="1" fill="#666699"/><rect x="6" y="150" width="1" height="1" fill="#ccccff"/><rect x="7" y="151" width="1" height="1" fill="#666699"/><rect x="8" y="148" width="1" height="1" fill="#ccccff"/><rect x="9" y="149" width="1" height="1" fill="#666699"/><rect x="10" y="150" width="1" height="1" fill="#ccccff"/><rect x="11" y="151" width="1" height="1" fill="#666699"/><rect x="0" y="152" width="1" height="1" fill="#ccccff"/><rect x="1" y="153" width="1" height="1" fill="#666699"/><rect x="2" y="154" width="1" height="1" fill="#ccccff"/><rect x="3" y="155" width="1" height="1" fill="#666699"/><rect x="4" y="152" width="1" height="1" fill="#ccccff"/><rect x="5" y="153" width="1" height="1" fill="#666699"/><rect x="6" y="154" width="1" height="1" fill="#ccccff"/><rect x="7" y="155" width="1" height="1" fill="#666699"/><rect x="8" y="152" width="1" height="1" fill="#ccccff"/><rect x="9" y="153" width="1" height="1" fill="#666699"/><rect x="10" y="154" width="1" height="1" fill="#ccccff"/><rect x="11" y="155" width="1" height="1" fill="#666699"/><rect x="0" y="156" width="1" height="1" fill="#ccccff"/><rect x="1" y="157" width="1" height="1" fill="#666699"/><rect x="2" y="158" width="1" height="1" fill="#ccccff"/><rect x="3" y="159" width="1" height="1" fill="#666699"/><rect x="4" y="156" width="1" height="1" fill="#ccccff"/><rect x="5" y="157" width="1" height="1" fill="#666699"/><rect x="6" y="158" width="1" height="1" fill="#ccccff"/><rect x="7" y="159" width="1" height="1" fill="#666699"/><rect x="8" y="156" width="1" height="1" fill="#ccccff"/><rect x="9" y="157" width="1" height="1" fill="#666699"/><rect x="10" y="158" width="1" height="1" fill="#ccccff"/><rect x="11" y="159" width="1" height="1" fill="#666699"/><rect x="0" y="160" width="1" height="1" fill="#ccccff"/><rect x="1" y="161" width="1" height="1" fill="#666699"/><rect x="2" y="162" width="1" height="1" fill="#ccccff"/><rect x="3" y="163" width="1" height="1" fill="#666699"/><rect x="4" y="160" width="1" height="1" fill="#ccccff"/><rect x="5" y="161" width="1" height="1" fill="#666699"/><rect x="6" y="162" width="1" height="1" fill="#ccccff"/><rect x="7" y="163" width="1" height="1" fill="#666699"/><rect x="8" y="160" width="1" height="1" fill="#ccccff"/><rect x="9" y="161" width="1" height="1" fill="#666699"/><rect x="10" y="162" width="1" height="1" fill="#ccccff"/><rect x="11" y="163" width="1" height="1" fill="#666699"/><rect x="0" y="164" width="1" height="1" fill="#ccccff"/><rect x="1" y="165" width="1" height="1" fill="#666699"/><rect x="2" y="166" width="1" height="1" fill="#ccccff"/><rect x="3" y="167" width="1" height="1" fill="#666699"/><rect x="4" y="164" width="1" height="1" fill="#ccccff"/><rect x="5" y="165" width="1" height="1" fill="#666699"/><rect x="6" y="166" width="1" height="1" fill="#ccccff"/><rect x="7" y="167" width="1" height="1" fill="#666699"/><rect x="8" y="164" width="1" height="1" fill="#ccccff"/><rect x="9" y="165" width="1" height="1" fill="#666699"/><rect x="10" y="166" width="1" height="1" fill="#ccccff"/><rect x="11" y="167" width="1" height="1" fill="#666699"/><rect x="0" y="168" width="1" height="1" fill="#ccccff"/><rect x="1" y="169" width="1" height="1" fill="#666699"/><rect x="2" y="170" width="1" height="1" fill="#ccccff"/><rect x="3" y="171" width="1" height="1" fill="#666699"/><rect x="4" y="168" width="1" height="1" fill="#ccccff"/><rect x="5" y="169" width="1" height="1" fill="#666699"/><rect x="6" y="170" width="1" height="1" fill="#ccccff"/><rect x="7" y="171" width="1" height="1" fill="#666699"/><rect x="8" y="168" width="1" height="1" fill="#ccccff"/><rect x="9" y="169" width="1" height="1" fill="#666699"/><rect x="10" y="170" width="1" height="1" fill="#ccccff"/><rect x="11" y="171" width="1" height="1" fill="#666699"/><rect x="0" y="172" width="1" height="1" fill="#ccccff"/><rect x="1" y="173" width="1" height="1" fill="#666699"/><rect x="2" y="174" width="1" height="1" fill="#ccccff"/><rect x="3" y="175" width="1" height="1" fill="#666699"/><rect x="4" y="172" width="1" height="1" fill="#ccccff"/><rect x="5" y="173" width="1" height="1" fill="#666699"/><rect x="6" y="174" width="1" height="1" fill="#ccccff"/><rect x="7" y="175" width="1" height="1" fill="#666699"/><rect x="8" y="172" width="1" height="1" fill="#ccccff"/><rect x="9" y="173" width="1" height="1" fill="#666699"/><rect x="10" y="174" width="1" height="1" fill="#ccccff"/><rect x="11" y="175" width="1" height="1" fill="#666699"/><rect x="0" y="176" width="1" height="1" fill="#ccccff"/><rect x="1" y="177" width="1" height="1" fill="#666699"/><rect x="2" y="178" width="1" height="1" fill="#ccccff"/><rect x="3" y="179" width="1" height="1" fill="#666699"/><rect x="4" y="176" width="1" height="1" fill="#ccccff"/><rect x="5" y="177" width="1" height="1" fill="#666699"/><rect x="6" y="178" width="1" height="1" fill="#ccccff"/><rect x="7" y="179" width="1" height="1" fill="#666699"/><rect x="8" y="176" width="1" height="1" fill="#ccccff"/><rect x="9" y="177" width="1" height="1" fill="#666699"/><rect x="10" y="178" width="1" height="1" fill="#ccccff"/><rect x="11" y="179" width="1" height="1" fill="#666699"/><rect x="0" y="180" width="1" height="1" fill="#ccccff"/><rect x="1" y="181" width="1" height="1" fill="#666699"/><rect x="2" y="182" width="1" height="1" fill="#ccccff"/><rect x="3" y="183" width="1" height="1" fill="#666699"/><rect x="4" y="180" width="1" height="1" fill="#ccccff"/><rect x="5" y="181" width="1" height="1" fill="#666699"/><rect x="6" y="182" width="1" height="1" fill="#ccccff"/><rect x="7" y="183" width="1" height="1" fill="#666699"/><rect x="8" y="180" width="1" height="1" fill="#ccccff"/><rect x="9" y="181" width="1" height="1" fill="#666699"/><rect x="10" y="182" width="1" height="1" fill="#ccccff"/><rect x="11" y="183" width="1" height="1" fill="#666699"/><rect x="0" y="184" width="1" height="1" fill="#ccccff"/><rect x="1" y="185" width="1" height="1" fill="#666699"/><rect x="2" y="186" width="1" height="1" fill="#ccccff"/><rect x="3" y="187" width="1" height="1" fill="#666699"/><rect x="4" y="184" width="1" height="1" fill="#ccccff"/><rect x="5" y="185" width="1" height="1" fill="#666699"/><rect x="6" y="186" width="1" height="1" fill="#ccccff"/><rect x="7" y="187" width="1" height="1" fill="#666699"/><rect x="8" y="184" width="1" height="1" fill="#ccccff"/><rect x="9" y="185" width="1" height="1" fill="#666699"/><rect x="10" y="186" width="1" height="1" fill="#ccccff"/><rect x="11" y="187" width="1" height="1" fill="#666699"/></svg>
<div style="position:absolute;left:709px;top:527px;width:16px;height:16px;background:#666666"></div>
<div style="position:absolute;left:710px;top:528px;width:14px;height:14px;background:#ffffff"></div>
<div style="position:absolute;left:711px;top:529px;width:13px;height:13px;background:#cccccc"></div>
<svg style="position:absolute;left:713px;top:534px" width="9" height="5" shape-rendering="crispEdges"><polygon points="0,0 9,0 5,5 4,5" fill="#000"/></svg>
<div class="t" style="left:5px;top:557px;">OpenVMS Alpha node ANDA3A - Cluster Summary</div>
</body></html>
